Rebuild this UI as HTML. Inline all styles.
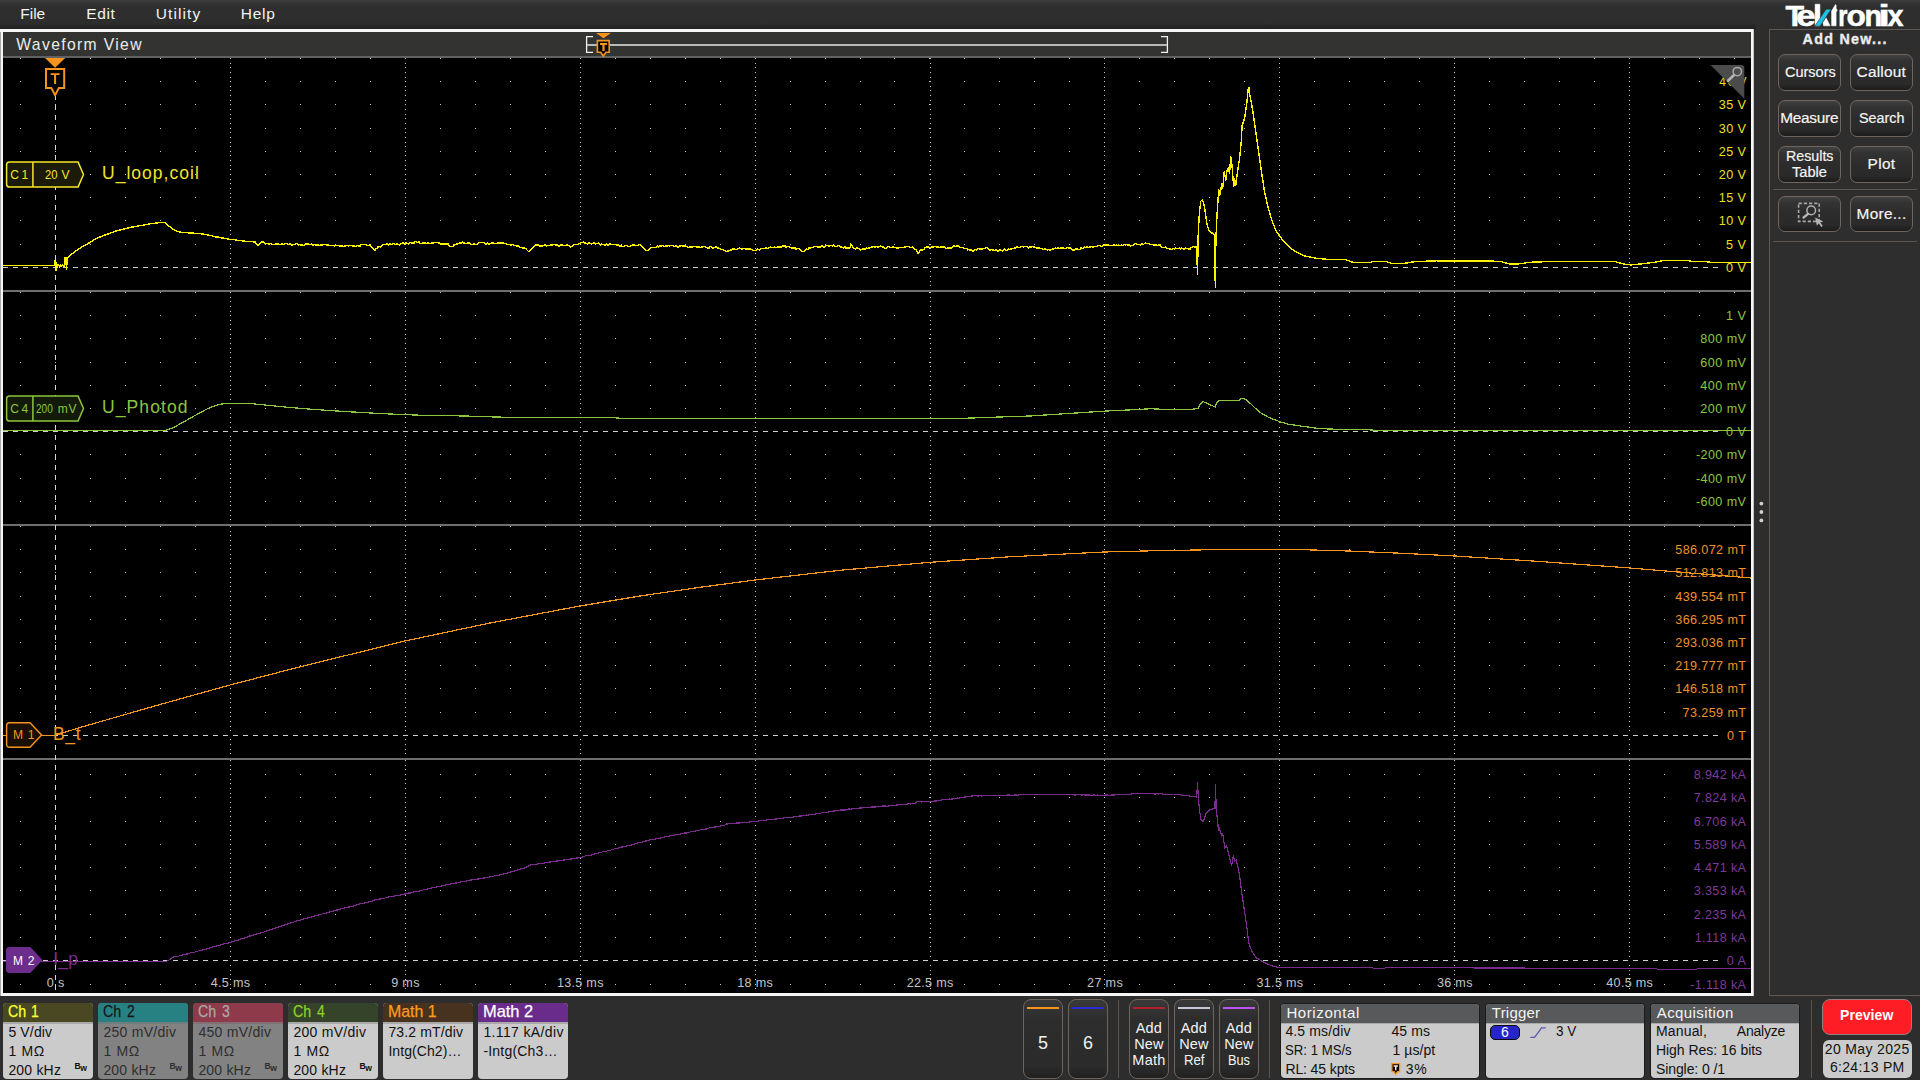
<!DOCTYPE html>
<html><head><meta charset="utf-8"><title>Scope</title>
<style>
html,body{margin:0;padding:0}
html{width:1920px;height:1080px;overflow:hidden;background:#2d2d2d}
body{width:1920px;height:1080px;position:relative;overflow:hidden;background:#2d2d2d;font-family:"Liberation Sans",sans-serif}
.t{position:absolute;white-space:pre;line-height:1;display:block}
.abs{position:absolute}
.btn{position:absolute;box-sizing:border-box;border:1px solid #6f655e;border-radius:7px;background:linear-gradient(#414141 0%,#333333 16%,#2c2c2c 50%,#2a2a2a 82%,#1c1c1c 100%)}
.badge{position:absolute;top:1003px;height:76px;border-radius:4px;overflow:hidden}
.badge .hd{position:absolute;left:0;top:0;right:0;height:19px}
.badge .ln{position:absolute;left:0;right:0;top:19px;height:2px}
</style></head><body>

<div class="abs" style="left:0;top:0;width:1920px;height:29px;background:linear-gradient(#3d3d3d 0px,#323232 4px,#2e2e2e 9px,#2d2d2d 29px)"></div>
<div class="abs" style="left:0;top:23px;width:1756px;height:6px;background:linear-gradient(rgba(34,34,34,0),#202020)"></div>
<span class="t" style="left:20.30px;top:6.00px;font-size:15.50px;color:#f2f2f2;letter-spacing:-0.025px;">File</span>
<span class="t" style="left:86.20px;top:6.00px;font-size:15.50px;color:#f2f2f2;letter-spacing:0.664px;">Edit</span>
<span class="t" style="left:155.80px;top:6.00px;font-size:15.50px;color:#f2f2f2;letter-spacing:1.085px;">Utility</span>
<span class="t" style="left:240.80px;top:6.00px;font-size:15.50px;color:#f2f2f2;letter-spacing:0.741px;">Help</span>
<div class="abs" style="left:0;top:29px;width:1754px;height:967px;background:#f6f6f6"></div>
<div class="abs" style="left:0;top:32px;width:1px;height:964px;background:#a8a8a8"></div>
<div class="abs" style="left:1753px;top:29px;width:1px;height:967px;background:#c4c4c4"></div>
<div class="abs" style="left:3px;top:32px;width:1748px;height:24px;background:#333331"></div>
<div class="abs" style="left:3px;top:56px;width:1748px;height:2px;background:#606264"></div>
<div class="abs" style="left:3px;top:58px;width:1748px;height:935px;background:#000"></div>
<span class="t" style="left:16.30px;top:37.00px;font-size:15.70px;color:#ececec;letter-spacing:1.354px;">Waveform View</span>
<svg class="abs" style="left:0;top:0" width="1920" height="1080" viewBox="0 0 1920 1080"><defs><clipPath id="cp"><rect x="3" y="58" width="1748" height="935"/></clipPath></defs><g clip-path="url(#cp)"><path d="M20 58h1M55 58h1M90 58h1M125 58h1M160 58h1M195 58h1M265 58h1M300 58h1M335 58h1M370 58h1M440 58h1M475 58h1M510 58h1M545 58h1M615 58h1M650 58h1M685 58h1M720 58h1M790 58h1M825 58h1M860 58h1M894 58h1M929 58h1M964 58h1M999 58h1M1034 58h1M1069 58h1M1139 58h1M1174 58h1M1209 58h1M1244 58h1M1314 58h1M1349 58h1M1384 58h1M1419 58h1M1489 58h1M1524 58h1M1559 58h1M1594 58h1M1664 58h1M1699 58h1M1734 58h1M20 81h1M55 81h1M90 81h1M125 81h1M160 81h1M195 81h1M265 81h1M300 81h1M335 81h1M370 81h1M440 81h1M475 81h1M510 81h1M545 81h1M615 81h1M650 81h1M685 81h1M720 81h1M790 81h1M825 81h1M860 81h1M894 81h1M929 81h1M964 81h1M999 81h1M1034 81h1M1069 81h1M1139 81h1M1174 81h1M1209 81h1M1244 81h1M1314 81h1M1349 81h1M1384 81h1M1419 81h1M1489 81h1M1524 81h1M1559 81h1M1594 81h1M1664 81h1M1699 81h1M1734 81h1M20 104h1M55 104h1M90 104h1M125 104h1M160 104h1M195 104h1M265 104h1M300 104h1M335 104h1M370 104h1M440 104h1M475 104h1M510 104h1M545 104h1M615 104h1M650 104h1M685 104h1M720 104h1M790 104h1M825 104h1M860 104h1M894 104h1M929 104h1M964 104h1M999 104h1M1034 104h1M1069 104h1M1139 104h1M1174 104h1M1209 104h1M1244 104h1M1314 104h1M1349 104h1M1384 104h1M1419 104h1M1489 104h1M1524 104h1M1559 104h1M1594 104h1M1664 104h1M1699 104h1M1734 104h1M20 128h1M55 128h1M90 128h1M125 128h1M160 128h1M195 128h1M265 128h1M300 128h1M335 128h1M370 128h1M440 128h1M475 128h1M510 128h1M545 128h1M615 128h1M650 128h1M685 128h1M720 128h1M790 128h1M825 128h1M860 128h1M894 128h1M929 128h1M964 128h1M999 128h1M1034 128h1M1069 128h1M1139 128h1M1174 128h1M1209 128h1M1244 128h1M1314 128h1M1349 128h1M1384 128h1M1419 128h1M1489 128h1M1524 128h1M1559 128h1M1594 128h1M1664 128h1M1699 128h1M1734 128h1M20 151h1M55 151h1M90 151h1M125 151h1M160 151h1M195 151h1M265 151h1M300 151h1M335 151h1M370 151h1M440 151h1M475 151h1M510 151h1M545 151h1M615 151h1M650 151h1M685 151h1M720 151h1M790 151h1M825 151h1M860 151h1M894 151h1M929 151h1M964 151h1M999 151h1M1034 151h1M1069 151h1M1139 151h1M1174 151h1M1209 151h1M1244 151h1M1314 151h1M1349 151h1M1384 151h1M1419 151h1M1489 151h1M1524 151h1M1559 151h1M1594 151h1M1664 151h1M1699 151h1M1734 151h1M20 174h1M55 174h1M90 174h1M125 174h1M160 174h1M195 174h1M265 174h1M300 174h1M335 174h1M370 174h1M440 174h1M475 174h1M510 174h1M545 174h1M615 174h1M650 174h1M685 174h1M720 174h1M790 174h1M825 174h1M860 174h1M894 174h1M929 174h1M964 174h1M999 174h1M1034 174h1M1069 174h1M1139 174h1M1174 174h1M1209 174h1M1244 174h1M1314 174h1M1349 174h1M1384 174h1M1419 174h1M1489 174h1M1524 174h1M1559 174h1M1594 174h1M1664 174h1M1699 174h1M1734 174h1M20 197h1M55 197h1M90 197h1M125 197h1M160 197h1M195 197h1M265 197h1M300 197h1M335 197h1M370 197h1M440 197h1M475 197h1M510 197h1M545 197h1M615 197h1M650 197h1M685 197h1M720 197h1M790 197h1M825 197h1M860 197h1M894 197h1M929 197h1M964 197h1M999 197h1M1034 197h1M1069 197h1M1139 197h1M1174 197h1M1209 197h1M1244 197h1M1314 197h1M1349 197h1M1384 197h1M1419 197h1M1489 197h1M1524 197h1M1559 197h1M1594 197h1M1664 197h1M1699 197h1M1734 197h1M20 220h1M55 220h1M90 220h1M125 220h1M160 220h1M195 220h1M265 220h1M300 220h1M335 220h1M370 220h1M440 220h1M475 220h1M510 220h1M545 220h1M615 220h1M650 220h1M685 220h1M720 220h1M790 220h1M825 220h1M860 220h1M894 220h1M929 220h1M964 220h1M999 220h1M1034 220h1M1069 220h1M1139 220h1M1174 220h1M1209 220h1M1244 220h1M1314 220h1M1349 220h1M1384 220h1M1419 220h1M1489 220h1M1524 220h1M1559 220h1M1594 220h1M1664 220h1M1699 220h1M1734 220h1M20 244h1M55 244h1M90 244h1M125 244h1M160 244h1M195 244h1M265 244h1M300 244h1M335 244h1M370 244h1M440 244h1M475 244h1M510 244h1M545 244h1M615 244h1M650 244h1M685 244h1M720 244h1M790 244h1M825 244h1M860 244h1M894 244h1M929 244h1M964 244h1M999 244h1M1034 244h1M1069 244h1M1139 244h1M1174 244h1M1209 244h1M1244 244h1M1314 244h1M1349 244h1M1384 244h1M1419 244h1M1489 244h1M1524 244h1M1559 244h1M1594 244h1M1664 244h1M1699 244h1M1734 244h1M230 58h1M230 63h1M230 67h1M230 72h1M230 77h1M230 81h1M230 86h1M230 90h1M230 95h1M230 100h1M230 104h1M230 109h1M230 114h1M230 118h1M230 123h1M230 128h1M230 132h1M230 137h1M230 142h1M230 146h1M230 151h1M230 155h1M230 160h1M230 165h1M230 169h1M230 174h1M230 179h1M230 183h1M230 188h1M230 193h1M230 197h1M230 202h1M230 206h1M230 211h1M230 216h1M230 220h1M230 225h1M230 230h1M230 234h1M230 239h1M230 244h1M230 248h1M230 253h1M230 258h1M230 262h1M230 271h1M230 276h1M230 281h1M230 285h1M405 58h1M405 63h1M405 67h1M405 72h1M405 77h1M405 81h1M405 86h1M405 90h1M405 95h1M405 100h1M405 104h1M405 109h1M405 114h1M405 118h1M405 123h1M405 128h1M405 132h1M405 137h1M405 142h1M405 146h1M405 151h1M405 155h1M405 160h1M405 165h1M405 169h1M405 174h1M405 179h1M405 183h1M405 188h1M405 193h1M405 197h1M405 202h1M405 206h1M405 211h1M405 216h1M405 220h1M405 225h1M405 230h1M405 234h1M405 239h1M405 244h1M405 248h1M405 253h1M405 258h1M405 262h1M405 271h1M405 276h1M405 281h1M405 285h1M580 58h1M580 63h1M580 67h1M580 72h1M580 77h1M580 81h1M580 86h1M580 90h1M580 95h1M580 100h1M580 104h1M580 109h1M580 114h1M580 118h1M580 123h1M580 128h1M580 132h1M580 137h1M580 142h1M580 146h1M580 151h1M580 155h1M580 160h1M580 165h1M580 169h1M580 174h1M580 179h1M580 183h1M580 188h1M580 193h1M580 197h1M580 202h1M580 206h1M580 211h1M580 216h1M580 220h1M580 225h1M580 230h1M580 234h1M580 239h1M580 244h1M580 248h1M580 253h1M580 258h1M580 262h1M580 271h1M580 276h1M580 281h1M580 285h1M755 58h1M755 63h1M755 67h1M755 72h1M755 77h1M755 81h1M755 86h1M755 90h1M755 95h1M755 100h1M755 104h1M755 109h1M755 114h1M755 118h1M755 123h1M755 128h1M755 132h1M755 137h1M755 142h1M755 146h1M755 151h1M755 155h1M755 160h1M755 165h1M755 169h1M755 174h1M755 179h1M755 183h1M755 188h1M755 193h1M755 197h1M755 202h1M755 206h1M755 211h1M755 216h1M755 220h1M755 225h1M755 230h1M755 234h1M755 239h1M755 244h1M755 248h1M755 253h1M755 258h1M755 262h1M755 271h1M755 276h1M755 281h1M755 285h1M930 58h1M930 63h1M930 67h1M930 72h1M930 77h1M930 81h1M930 86h1M930 90h1M930 95h1M930 100h1M930 104h1M930 109h1M930 114h1M930 118h1M930 123h1M930 128h1M930 132h1M930 137h1M930 142h1M930 146h1M930 151h1M930 155h1M930 160h1M930 165h1M930 169h1M930 174h1M930 179h1M930 183h1M930 188h1M930 193h1M930 197h1M930 202h1M930 206h1M930 211h1M930 216h1M930 220h1M930 225h1M930 230h1M930 234h1M930 239h1M930 244h1M930 248h1M930 253h1M930 258h1M930 262h1M930 271h1M930 276h1M930 281h1M930 285h1M1104 58h1M1104 63h1M1104 67h1M1104 72h1M1104 77h1M1104 81h1M1104 86h1M1104 90h1M1104 95h1M1104 100h1M1104 104h1M1104 109h1M1104 114h1M1104 118h1M1104 123h1M1104 128h1M1104 132h1M1104 137h1M1104 142h1M1104 146h1M1104 151h1M1104 155h1M1104 160h1M1104 165h1M1104 169h1M1104 174h1M1104 179h1M1104 183h1M1104 188h1M1104 193h1M1104 197h1M1104 202h1M1104 206h1M1104 211h1M1104 216h1M1104 220h1M1104 225h1M1104 230h1M1104 234h1M1104 239h1M1104 244h1M1104 248h1M1104 253h1M1104 258h1M1104 262h1M1104 271h1M1104 276h1M1104 281h1M1104 285h1M1279 58h1M1279 63h1M1279 67h1M1279 72h1M1279 77h1M1279 81h1M1279 86h1M1279 90h1M1279 95h1M1279 100h1M1279 104h1M1279 109h1M1279 114h1M1279 118h1M1279 123h1M1279 128h1M1279 132h1M1279 137h1M1279 142h1M1279 146h1M1279 151h1M1279 155h1M1279 160h1M1279 165h1M1279 169h1M1279 174h1M1279 179h1M1279 183h1M1279 188h1M1279 193h1M1279 197h1M1279 202h1M1279 206h1M1279 211h1M1279 216h1M1279 220h1M1279 225h1M1279 230h1M1279 234h1M1279 239h1M1279 244h1M1279 248h1M1279 253h1M1279 258h1M1279 262h1M1279 271h1M1279 276h1M1279 281h1M1279 285h1M1454 58h1M1454 63h1M1454 67h1M1454 72h1M1454 77h1M1454 81h1M1454 86h1M1454 90h1M1454 95h1M1454 100h1M1454 104h1M1454 109h1M1454 114h1M1454 118h1M1454 123h1M1454 128h1M1454 132h1M1454 137h1M1454 142h1M1454 146h1M1454 151h1M1454 155h1M1454 160h1M1454 165h1M1454 169h1M1454 174h1M1454 179h1M1454 183h1M1454 188h1M1454 193h1M1454 197h1M1454 202h1M1454 206h1M1454 211h1M1454 216h1M1454 220h1M1454 225h1M1454 230h1M1454 234h1M1454 239h1M1454 244h1M1454 248h1M1454 253h1M1454 258h1M1454 262h1M1454 271h1M1454 276h1M1454 281h1M1454 285h1M1629 58h1M1629 63h1M1629 67h1M1629 72h1M1629 77h1M1629 81h1M1629 86h1M1629 90h1M1629 95h1M1629 100h1M1629 104h1M1629 109h1M1629 114h1M1629 118h1M1629 123h1M1629 128h1M1629 132h1M1629 137h1M1629 142h1M1629 146h1M1629 151h1M1629 155h1M1629 160h1M1629 165h1M1629 169h1M1629 174h1M1629 179h1M1629 183h1M1629 188h1M1629 193h1M1629 197h1M1629 202h1M1629 206h1M1629 211h1M1629 216h1M1629 220h1M1629 225h1M1629 230h1M1629 234h1M1629 239h1M1629 244h1M1629 248h1M1629 253h1M1629 258h1M1629 262h1M1629 271h1M1629 276h1M1629 281h1M1629 285h1M20 292h1M55 292h1M90 292h1M125 292h1M160 292h1M195 292h1M265 292h1M300 292h1M335 292h1M370 292h1M440 292h1M475 292h1M510 292h1M545 292h1M615 292h1M650 292h1M685 292h1M720 292h1M790 292h1M825 292h1M860 292h1M894 292h1M929 292h1M964 292h1M999 292h1M1034 292h1M1069 292h1M1139 292h1M1174 292h1M1209 292h1M1244 292h1M1314 292h1M1349 292h1M1384 292h1M1419 292h1M1489 292h1M1524 292h1M1559 292h1M1594 292h1M1664 292h1M1699 292h1M1734 292h1M20 315h1M55 315h1M90 315h1M125 315h1M160 315h1M195 315h1M265 315h1M300 315h1M335 315h1M370 315h1M440 315h1M475 315h1M510 315h1M545 315h1M615 315h1M650 315h1M685 315h1M720 315h1M790 315h1M825 315h1M860 315h1M894 315h1M929 315h1M964 315h1M999 315h1M1034 315h1M1069 315h1M1139 315h1M1174 315h1M1209 315h1M1244 315h1M1314 315h1M1349 315h1M1384 315h1M1419 315h1M1489 315h1M1524 315h1M1559 315h1M1594 315h1M1664 315h1M1699 315h1M1734 315h1M20 338h1M55 338h1M90 338h1M125 338h1M160 338h1M195 338h1M265 338h1M300 338h1M335 338h1M370 338h1M440 338h1M475 338h1M510 338h1M545 338h1M615 338h1M650 338h1M685 338h1M720 338h1M790 338h1M825 338h1M860 338h1M894 338h1M929 338h1M964 338h1M999 338h1M1034 338h1M1069 338h1M1139 338h1M1174 338h1M1209 338h1M1244 338h1M1314 338h1M1349 338h1M1384 338h1M1419 338h1M1489 338h1M1524 338h1M1559 338h1M1594 338h1M1664 338h1M1699 338h1M1734 338h1M20 362h1M55 362h1M90 362h1M125 362h1M160 362h1M195 362h1M265 362h1M300 362h1M335 362h1M370 362h1M440 362h1M475 362h1M510 362h1M545 362h1M615 362h1M650 362h1M685 362h1M720 362h1M790 362h1M825 362h1M860 362h1M894 362h1M929 362h1M964 362h1M999 362h1M1034 362h1M1069 362h1M1139 362h1M1174 362h1M1209 362h1M1244 362h1M1314 362h1M1349 362h1M1384 362h1M1419 362h1M1489 362h1M1524 362h1M1559 362h1M1594 362h1M1664 362h1M1699 362h1M1734 362h1M20 385h1M55 385h1M90 385h1M125 385h1M160 385h1M195 385h1M265 385h1M300 385h1M335 385h1M370 385h1M440 385h1M475 385h1M510 385h1M545 385h1M615 385h1M650 385h1M685 385h1M720 385h1M790 385h1M825 385h1M860 385h1M894 385h1M929 385h1M964 385h1M999 385h1M1034 385h1M1069 385h1M1139 385h1M1174 385h1M1209 385h1M1244 385h1M1314 385h1M1349 385h1M1384 385h1M1419 385h1M1489 385h1M1524 385h1M1559 385h1M1594 385h1M1664 385h1M1699 385h1M1734 385h1M20 408h1M55 408h1M90 408h1M125 408h1M160 408h1M195 408h1M265 408h1M300 408h1M335 408h1M370 408h1M440 408h1M475 408h1M510 408h1M545 408h1M615 408h1M650 408h1M685 408h1M720 408h1M790 408h1M825 408h1M860 408h1M894 408h1M929 408h1M964 408h1M999 408h1M1034 408h1M1069 408h1M1139 408h1M1174 408h1M1209 408h1M1244 408h1M1314 408h1M1349 408h1M1384 408h1M1419 408h1M1489 408h1M1524 408h1M1559 408h1M1594 408h1M1664 408h1M1699 408h1M1734 408h1M20 454h1M55 454h1M90 454h1M125 454h1M160 454h1M195 454h1M265 454h1M300 454h1M335 454h1M370 454h1M440 454h1M475 454h1M510 454h1M545 454h1M615 454h1M650 454h1M685 454h1M720 454h1M790 454h1M825 454h1M860 454h1M894 454h1M929 454h1M964 454h1M999 454h1M1034 454h1M1069 454h1M1139 454h1M1174 454h1M1209 454h1M1244 454h1M1314 454h1M1349 454h1M1384 454h1M1419 454h1M1489 454h1M1524 454h1M1559 454h1M1594 454h1M1664 454h1M1699 454h1M1734 454h1M20 478h1M55 478h1M90 478h1M125 478h1M160 478h1M195 478h1M265 478h1M300 478h1M335 478h1M370 478h1M440 478h1M475 478h1M510 478h1M545 478h1M615 478h1M650 478h1M685 478h1M720 478h1M790 478h1M825 478h1M860 478h1M894 478h1M929 478h1M964 478h1M999 478h1M1034 478h1M1069 478h1M1139 478h1M1174 478h1M1209 478h1M1244 478h1M1314 478h1M1349 478h1M1384 478h1M1419 478h1M1489 478h1M1524 478h1M1559 478h1M1594 478h1M1664 478h1M1699 478h1M1734 478h1M20 501h1M55 501h1M90 501h1M125 501h1M160 501h1M195 501h1M265 501h1M300 501h1M335 501h1M370 501h1M440 501h1M475 501h1M510 501h1M545 501h1M615 501h1M650 501h1M685 501h1M720 501h1M790 501h1M825 501h1M860 501h1M894 501h1M929 501h1M964 501h1M999 501h1M1034 501h1M1069 501h1M1139 501h1M1174 501h1M1209 501h1M1244 501h1M1314 501h1M1349 501h1M1384 501h1M1419 501h1M1489 501h1M1524 501h1M1559 501h1M1594 501h1M1664 501h1M1699 501h1M1734 501h1M230 292h1M230 297h1M230 301h1M230 306h1M230 311h1M230 315h1M230 320h1M230 324h1M230 329h1M230 334h1M230 338h1M230 343h1M230 348h1M230 352h1M230 357h1M230 362h1M230 366h1M230 371h1M230 376h1M230 380h1M230 385h1M230 389h1M230 394h1M230 399h1M230 403h1M230 408h1M230 413h1M230 417h1M230 422h1M230 427h1M230 436h1M230 440h1M230 445h1M230 450h1M230 454h1M230 459h1M230 464h1M230 468h1M230 473h1M230 478h1M230 482h1M230 487h1M230 492h1M230 496h1M230 501h1M230 505h1M230 510h1M230 515h1M230 519h1M405 292h1M405 297h1M405 301h1M405 306h1M405 311h1M405 315h1M405 320h1M405 324h1M405 329h1M405 334h1M405 338h1M405 343h1M405 348h1M405 352h1M405 357h1M405 362h1M405 366h1M405 371h1M405 376h1M405 380h1M405 385h1M405 389h1M405 394h1M405 399h1M405 403h1M405 408h1M405 413h1M405 417h1M405 422h1M405 427h1M405 436h1M405 440h1M405 445h1M405 450h1M405 454h1M405 459h1M405 464h1M405 468h1M405 473h1M405 478h1M405 482h1M405 487h1M405 492h1M405 496h1M405 501h1M405 505h1M405 510h1M405 515h1M405 519h1M580 292h1M580 297h1M580 301h1M580 306h1M580 311h1M580 315h1M580 320h1M580 324h1M580 329h1M580 334h1M580 338h1M580 343h1M580 348h1M580 352h1M580 357h1M580 362h1M580 366h1M580 371h1M580 376h1M580 380h1M580 385h1M580 389h1M580 394h1M580 399h1M580 403h1M580 408h1M580 413h1M580 417h1M580 422h1M580 427h1M580 436h1M580 440h1M580 445h1M580 450h1M580 454h1M580 459h1M580 464h1M580 468h1M580 473h1M580 478h1M580 482h1M580 487h1M580 492h1M580 496h1M580 501h1M580 505h1M580 510h1M580 515h1M580 519h1M755 292h1M755 297h1M755 301h1M755 306h1M755 311h1M755 315h1M755 320h1M755 324h1M755 329h1M755 334h1M755 338h1M755 343h1M755 348h1M755 352h1M755 357h1M755 362h1M755 366h1M755 371h1M755 376h1M755 380h1M755 385h1M755 389h1M755 394h1M755 399h1M755 403h1M755 408h1M755 413h1M755 417h1M755 422h1M755 427h1M755 436h1M755 440h1M755 445h1M755 450h1M755 454h1M755 459h1M755 464h1M755 468h1M755 473h1M755 478h1M755 482h1M755 487h1M755 492h1M755 496h1M755 501h1M755 505h1M755 510h1M755 515h1M755 519h1M930 292h1M930 297h1M930 301h1M930 306h1M930 311h1M930 315h1M930 320h1M930 324h1M930 329h1M930 334h1M930 338h1M930 343h1M930 348h1M930 352h1M930 357h1M930 362h1M930 366h1M930 371h1M930 376h1M930 380h1M930 385h1M930 389h1M930 394h1M930 399h1M930 403h1M930 408h1M930 413h1M930 417h1M930 422h1M930 427h1M930 436h1M930 440h1M930 445h1M930 450h1M930 454h1M930 459h1M930 464h1M930 468h1M930 473h1M930 478h1M930 482h1M930 487h1M930 492h1M930 496h1M930 501h1M930 505h1M930 510h1M930 515h1M930 519h1M1104 292h1M1104 297h1M1104 301h1M1104 306h1M1104 311h1M1104 315h1M1104 320h1M1104 324h1M1104 329h1M1104 334h1M1104 338h1M1104 343h1M1104 348h1M1104 352h1M1104 357h1M1104 362h1M1104 366h1M1104 371h1M1104 376h1M1104 380h1M1104 385h1M1104 389h1M1104 394h1M1104 399h1M1104 403h1M1104 408h1M1104 413h1M1104 417h1M1104 422h1M1104 427h1M1104 436h1M1104 440h1M1104 445h1M1104 450h1M1104 454h1M1104 459h1M1104 464h1M1104 468h1M1104 473h1M1104 478h1M1104 482h1M1104 487h1M1104 492h1M1104 496h1M1104 501h1M1104 505h1M1104 510h1M1104 515h1M1104 519h1M1279 292h1M1279 297h1M1279 301h1M1279 306h1M1279 311h1M1279 315h1M1279 320h1M1279 324h1M1279 329h1M1279 334h1M1279 338h1M1279 343h1M1279 348h1M1279 352h1M1279 357h1M1279 362h1M1279 366h1M1279 371h1M1279 376h1M1279 380h1M1279 385h1M1279 389h1M1279 394h1M1279 399h1M1279 403h1M1279 408h1M1279 413h1M1279 417h1M1279 422h1M1279 427h1M1279 436h1M1279 440h1M1279 445h1M1279 450h1M1279 454h1M1279 459h1M1279 464h1M1279 468h1M1279 473h1M1279 478h1M1279 482h1M1279 487h1M1279 492h1M1279 496h1M1279 501h1M1279 505h1M1279 510h1M1279 515h1M1279 519h1M1454 292h1M1454 297h1M1454 301h1M1454 306h1M1454 311h1M1454 315h1M1454 320h1M1454 324h1M1454 329h1M1454 334h1M1454 338h1M1454 343h1M1454 348h1M1454 352h1M1454 357h1M1454 362h1M1454 366h1M1454 371h1M1454 376h1M1454 380h1M1454 385h1M1454 389h1M1454 394h1M1454 399h1M1454 403h1M1454 408h1M1454 413h1M1454 417h1M1454 422h1M1454 427h1M1454 436h1M1454 440h1M1454 445h1M1454 450h1M1454 454h1M1454 459h1M1454 464h1M1454 468h1M1454 473h1M1454 478h1M1454 482h1M1454 487h1M1454 492h1M1454 496h1M1454 501h1M1454 505h1M1454 510h1M1454 515h1M1454 519h1M1629 292h1M1629 297h1M1629 301h1M1629 306h1M1629 311h1M1629 315h1M1629 320h1M1629 324h1M1629 329h1M1629 334h1M1629 338h1M1629 343h1M1629 348h1M1629 352h1M1629 357h1M1629 362h1M1629 366h1M1629 371h1M1629 376h1M1629 380h1M1629 385h1M1629 389h1M1629 394h1M1629 399h1M1629 403h1M1629 408h1M1629 413h1M1629 417h1M1629 422h1M1629 427h1M1629 436h1M1629 440h1M1629 445h1M1629 450h1M1629 454h1M1629 459h1M1629 464h1M1629 468h1M1629 473h1M1629 478h1M1629 482h1M1629 487h1M1629 492h1M1629 496h1M1629 501h1M1629 505h1M1629 510h1M1629 515h1M1629 519h1M20 526h1M55 526h1M90 526h1M125 526h1M160 526h1M195 526h1M265 526h1M300 526h1M335 526h1M370 526h1M440 526h1M475 526h1M510 526h1M545 526h1M615 526h1M650 526h1M685 526h1M720 526h1M790 526h1M825 526h1M860 526h1M894 526h1M929 526h1M964 526h1M999 526h1M1034 526h1M1069 526h1M1139 526h1M1174 526h1M1209 526h1M1244 526h1M1314 526h1M1349 526h1M1384 526h1M1419 526h1M1489 526h1M1524 526h1M1559 526h1M1594 526h1M1664 526h1M1699 526h1M1734 526h1M20 549h1M55 549h1M90 549h1M125 549h1M160 549h1M195 549h1M265 549h1M300 549h1M335 549h1M370 549h1M440 549h1M475 549h1M510 549h1M545 549h1M615 549h1M650 549h1M685 549h1M720 549h1M790 549h1M825 549h1M860 549h1M894 549h1M929 549h1M964 549h1M999 549h1M1034 549h1M1069 549h1M1139 549h1M1174 549h1M1209 549h1M1244 549h1M1314 549h1M1349 549h1M1384 549h1M1419 549h1M1489 549h1M1524 549h1M1559 549h1M1594 549h1M1664 549h1M1699 549h1M1734 549h1M20 572h1M55 572h1M90 572h1M125 572h1M160 572h1M195 572h1M265 572h1M300 572h1M335 572h1M370 572h1M440 572h1M475 572h1M510 572h1M545 572h1M615 572h1M650 572h1M685 572h1M720 572h1M790 572h1M825 572h1M860 572h1M894 572h1M929 572h1M964 572h1M999 572h1M1034 572h1M1069 572h1M1139 572h1M1174 572h1M1209 572h1M1244 572h1M1314 572h1M1349 572h1M1384 572h1M1419 572h1M1489 572h1M1524 572h1M1559 572h1M1594 572h1M1664 572h1M1699 572h1M1734 572h1M20 596h1M55 596h1M90 596h1M125 596h1M160 596h1M195 596h1M265 596h1M300 596h1M335 596h1M370 596h1M440 596h1M475 596h1M510 596h1M545 596h1M615 596h1M650 596h1M685 596h1M720 596h1M790 596h1M825 596h1M860 596h1M894 596h1M929 596h1M964 596h1M999 596h1M1034 596h1M1069 596h1M1139 596h1M1174 596h1M1209 596h1M1244 596h1M1314 596h1M1349 596h1M1384 596h1M1419 596h1M1489 596h1M1524 596h1M1559 596h1M1594 596h1M1664 596h1M1699 596h1M1734 596h1M20 619h1M55 619h1M90 619h1M125 619h1M160 619h1M195 619h1M265 619h1M300 619h1M335 619h1M370 619h1M440 619h1M475 619h1M510 619h1M545 619h1M615 619h1M650 619h1M685 619h1M720 619h1M790 619h1M825 619h1M860 619h1M894 619h1M929 619h1M964 619h1M999 619h1M1034 619h1M1069 619h1M1139 619h1M1174 619h1M1209 619h1M1244 619h1M1314 619h1M1349 619h1M1384 619h1M1419 619h1M1489 619h1M1524 619h1M1559 619h1M1594 619h1M1664 619h1M1699 619h1M1734 619h1M20 642h1M55 642h1M90 642h1M125 642h1M160 642h1M195 642h1M265 642h1M300 642h1M335 642h1M370 642h1M440 642h1M475 642h1M510 642h1M545 642h1M615 642h1M650 642h1M685 642h1M720 642h1M790 642h1M825 642h1M860 642h1M894 642h1M929 642h1M964 642h1M999 642h1M1034 642h1M1069 642h1M1139 642h1M1174 642h1M1209 642h1M1244 642h1M1314 642h1M1349 642h1M1384 642h1M1419 642h1M1489 642h1M1524 642h1M1559 642h1M1594 642h1M1664 642h1M1699 642h1M1734 642h1M20 665h1M55 665h1M90 665h1M125 665h1M160 665h1M195 665h1M265 665h1M300 665h1M335 665h1M370 665h1M440 665h1M475 665h1M510 665h1M545 665h1M615 665h1M650 665h1M685 665h1M720 665h1M790 665h1M825 665h1M860 665h1M894 665h1M929 665h1M964 665h1M999 665h1M1034 665h1M1069 665h1M1139 665h1M1174 665h1M1209 665h1M1244 665h1M1314 665h1M1349 665h1M1384 665h1M1419 665h1M1489 665h1M1524 665h1M1559 665h1M1594 665h1M1664 665h1M1699 665h1M1734 665h1M20 688h1M55 688h1M90 688h1M125 688h1M160 688h1M195 688h1M265 688h1M300 688h1M335 688h1M370 688h1M440 688h1M475 688h1M510 688h1M545 688h1M615 688h1M650 688h1M685 688h1M720 688h1M790 688h1M825 688h1M860 688h1M894 688h1M929 688h1M964 688h1M999 688h1M1034 688h1M1069 688h1M1139 688h1M1174 688h1M1209 688h1M1244 688h1M1314 688h1M1349 688h1M1384 688h1M1419 688h1M1489 688h1M1524 688h1M1559 688h1M1594 688h1M1664 688h1M1699 688h1M1734 688h1M20 712h1M55 712h1M90 712h1M125 712h1M160 712h1M195 712h1M265 712h1M300 712h1M335 712h1M370 712h1M440 712h1M475 712h1M510 712h1M545 712h1M615 712h1M650 712h1M685 712h1M720 712h1M790 712h1M825 712h1M860 712h1M894 712h1M929 712h1M964 712h1M999 712h1M1034 712h1M1069 712h1M1139 712h1M1174 712h1M1209 712h1M1244 712h1M1314 712h1M1349 712h1M1384 712h1M1419 712h1M1489 712h1M1524 712h1M1559 712h1M1594 712h1M1664 712h1M1699 712h1M1734 712h1M230 526h1M230 531h1M230 535h1M230 540h1M230 545h1M230 549h1M230 554h1M230 558h1M230 563h1M230 568h1M230 572h1M230 577h1M230 582h1M230 586h1M230 591h1M230 596h1M230 600h1M230 605h1M230 610h1M230 614h1M230 619h1M230 623h1M230 628h1M230 633h1M230 637h1M230 642h1M230 647h1M230 651h1M230 656h1M230 661h1M230 665h1M230 670h1M230 674h1M230 679h1M230 684h1M230 688h1M230 693h1M230 698h1M230 702h1M230 707h1M230 712h1M230 716h1M230 721h1M230 726h1M230 730h1M230 739h1M230 744h1M230 749h1M230 753h1M405 526h1M405 531h1M405 535h1M405 540h1M405 545h1M405 549h1M405 554h1M405 558h1M405 563h1M405 568h1M405 572h1M405 577h1M405 582h1M405 586h1M405 591h1M405 596h1M405 600h1M405 605h1M405 610h1M405 614h1M405 619h1M405 623h1M405 628h1M405 633h1M405 637h1M405 642h1M405 647h1M405 651h1M405 656h1M405 661h1M405 665h1M405 670h1M405 674h1M405 679h1M405 684h1M405 688h1M405 693h1M405 698h1M405 702h1M405 707h1M405 712h1M405 716h1M405 721h1M405 726h1M405 730h1M405 739h1M405 744h1M405 749h1M405 753h1M580 526h1M580 531h1M580 535h1M580 540h1M580 545h1M580 549h1M580 554h1M580 558h1M580 563h1M580 568h1M580 572h1M580 577h1M580 582h1M580 586h1M580 591h1M580 596h1M580 600h1M580 605h1M580 610h1M580 614h1M580 619h1M580 623h1M580 628h1M580 633h1M580 637h1M580 642h1M580 647h1M580 651h1M580 656h1M580 661h1M580 665h1M580 670h1M580 674h1M580 679h1M580 684h1M580 688h1M580 693h1M580 698h1M580 702h1M580 707h1M580 712h1M580 716h1M580 721h1M580 726h1M580 730h1M580 739h1M580 744h1M580 749h1M580 753h1M755 526h1M755 531h1M755 535h1M755 540h1M755 545h1M755 549h1M755 554h1M755 558h1M755 563h1M755 568h1M755 572h1M755 577h1M755 582h1M755 586h1M755 591h1M755 596h1M755 600h1M755 605h1M755 610h1M755 614h1M755 619h1M755 623h1M755 628h1M755 633h1M755 637h1M755 642h1M755 647h1M755 651h1M755 656h1M755 661h1M755 665h1M755 670h1M755 674h1M755 679h1M755 684h1M755 688h1M755 693h1M755 698h1M755 702h1M755 707h1M755 712h1M755 716h1M755 721h1M755 726h1M755 730h1M755 739h1M755 744h1M755 749h1M755 753h1M930 526h1M930 531h1M930 535h1M930 540h1M930 545h1M930 549h1M930 554h1M930 558h1M930 563h1M930 568h1M930 572h1M930 577h1M930 582h1M930 586h1M930 591h1M930 596h1M930 600h1M930 605h1M930 610h1M930 614h1M930 619h1M930 623h1M930 628h1M930 633h1M930 637h1M930 642h1M930 647h1M930 651h1M930 656h1M930 661h1M930 665h1M930 670h1M930 674h1M930 679h1M930 684h1M930 688h1M930 693h1M930 698h1M930 702h1M930 707h1M930 712h1M930 716h1M930 721h1M930 726h1M930 730h1M930 739h1M930 744h1M930 749h1M930 753h1M1104 526h1M1104 531h1M1104 535h1M1104 540h1M1104 545h1M1104 549h1M1104 554h1M1104 558h1M1104 563h1M1104 568h1M1104 572h1M1104 577h1M1104 582h1M1104 586h1M1104 591h1M1104 596h1M1104 600h1M1104 605h1M1104 610h1M1104 614h1M1104 619h1M1104 623h1M1104 628h1M1104 633h1M1104 637h1M1104 642h1M1104 647h1M1104 651h1M1104 656h1M1104 661h1M1104 665h1M1104 670h1M1104 674h1M1104 679h1M1104 684h1M1104 688h1M1104 693h1M1104 698h1M1104 702h1M1104 707h1M1104 712h1M1104 716h1M1104 721h1M1104 726h1M1104 730h1M1104 739h1M1104 744h1M1104 749h1M1104 753h1M1279 526h1M1279 531h1M1279 535h1M1279 540h1M1279 545h1M1279 549h1M1279 554h1M1279 558h1M1279 563h1M1279 568h1M1279 572h1M1279 577h1M1279 582h1M1279 586h1M1279 591h1M1279 596h1M1279 600h1M1279 605h1M1279 610h1M1279 614h1M1279 619h1M1279 623h1M1279 628h1M1279 633h1M1279 637h1M1279 642h1M1279 647h1M1279 651h1M1279 656h1M1279 661h1M1279 665h1M1279 670h1M1279 674h1M1279 679h1M1279 684h1M1279 688h1M1279 693h1M1279 698h1M1279 702h1M1279 707h1M1279 712h1M1279 716h1M1279 721h1M1279 726h1M1279 730h1M1279 739h1M1279 744h1M1279 749h1M1279 753h1M1454 526h1M1454 531h1M1454 535h1M1454 540h1M1454 545h1M1454 549h1M1454 554h1M1454 558h1M1454 563h1M1454 568h1M1454 572h1M1454 577h1M1454 582h1M1454 586h1M1454 591h1M1454 596h1M1454 600h1M1454 605h1M1454 610h1M1454 614h1M1454 619h1M1454 623h1M1454 628h1M1454 633h1M1454 637h1M1454 642h1M1454 647h1M1454 651h1M1454 656h1M1454 661h1M1454 665h1M1454 670h1M1454 674h1M1454 679h1M1454 684h1M1454 688h1M1454 693h1M1454 698h1M1454 702h1M1454 707h1M1454 712h1M1454 716h1M1454 721h1M1454 726h1M1454 730h1M1454 739h1M1454 744h1M1454 749h1M1454 753h1M1629 526h1M1629 531h1M1629 535h1M1629 540h1M1629 545h1M1629 549h1M1629 554h1M1629 558h1M1629 563h1M1629 568h1M1629 572h1M1629 577h1M1629 582h1M1629 586h1M1629 591h1M1629 596h1M1629 600h1M1629 605h1M1629 610h1M1629 614h1M1629 619h1M1629 623h1M1629 628h1M1629 633h1M1629 637h1M1629 642h1M1629 647h1M1629 651h1M1629 656h1M1629 661h1M1629 665h1M1629 670h1M1629 674h1M1629 679h1M1629 684h1M1629 688h1M1629 693h1M1629 698h1M1629 702h1M1629 707h1M1629 712h1M1629 716h1M1629 721h1M1629 726h1M1629 730h1M1629 739h1M1629 744h1M1629 749h1M1629 753h1M20 774h1M55 774h1M90 774h1M125 774h1M160 774h1M195 774h1M265 774h1M300 774h1M335 774h1M370 774h1M440 774h1M475 774h1M510 774h1M545 774h1M615 774h1M650 774h1M685 774h1M720 774h1M790 774h1M825 774h1M860 774h1M894 774h1M929 774h1M964 774h1M999 774h1M1034 774h1M1069 774h1M1139 774h1M1174 774h1M1209 774h1M1244 774h1M1314 774h1M1349 774h1M1384 774h1M1419 774h1M1489 774h1M1524 774h1M1559 774h1M1594 774h1M1664 774h1M1699 774h1M1734 774h1M20 797h1M55 797h1M90 797h1M125 797h1M160 797h1M195 797h1M265 797h1M300 797h1M335 797h1M370 797h1M440 797h1M475 797h1M510 797h1M545 797h1M615 797h1M650 797h1M685 797h1M720 797h1M790 797h1M825 797h1M860 797h1M894 797h1M929 797h1M964 797h1M999 797h1M1034 797h1M1069 797h1M1139 797h1M1174 797h1M1209 797h1M1244 797h1M1314 797h1M1349 797h1M1384 797h1M1419 797h1M1489 797h1M1524 797h1M1559 797h1M1594 797h1M1664 797h1M1699 797h1M1734 797h1M20 821h1M55 821h1M90 821h1M125 821h1M160 821h1M195 821h1M265 821h1M300 821h1M335 821h1M370 821h1M440 821h1M475 821h1M510 821h1M545 821h1M615 821h1M650 821h1M685 821h1M720 821h1M790 821h1M825 821h1M860 821h1M894 821h1M929 821h1M964 821h1M999 821h1M1034 821h1M1069 821h1M1139 821h1M1174 821h1M1209 821h1M1244 821h1M1314 821h1M1349 821h1M1384 821h1M1419 821h1M1489 821h1M1524 821h1M1559 821h1M1594 821h1M1664 821h1M1699 821h1M1734 821h1M20 844h1M55 844h1M90 844h1M125 844h1M160 844h1M195 844h1M265 844h1M300 844h1M335 844h1M370 844h1M440 844h1M475 844h1M510 844h1M545 844h1M615 844h1M650 844h1M685 844h1M720 844h1M790 844h1M825 844h1M860 844h1M894 844h1M929 844h1M964 844h1M999 844h1M1034 844h1M1069 844h1M1139 844h1M1174 844h1M1209 844h1M1244 844h1M1314 844h1M1349 844h1M1384 844h1M1419 844h1M1489 844h1M1524 844h1M1559 844h1M1594 844h1M1664 844h1M1699 844h1M1734 844h1M20 867h1M55 867h1M90 867h1M125 867h1M160 867h1M195 867h1M265 867h1M300 867h1M335 867h1M370 867h1M440 867h1M475 867h1M510 867h1M545 867h1M615 867h1M650 867h1M685 867h1M720 867h1M790 867h1M825 867h1M860 867h1M894 867h1M929 867h1M964 867h1M999 867h1M1034 867h1M1069 867h1M1139 867h1M1174 867h1M1209 867h1M1244 867h1M1314 867h1M1349 867h1M1384 867h1M1419 867h1M1489 867h1M1524 867h1M1559 867h1M1594 867h1M1664 867h1M1699 867h1M1734 867h1M20 890h1M55 890h1M90 890h1M125 890h1M160 890h1M195 890h1M265 890h1M300 890h1M335 890h1M370 890h1M440 890h1M475 890h1M510 890h1M545 890h1M615 890h1M650 890h1M685 890h1M720 890h1M790 890h1M825 890h1M860 890h1M894 890h1M929 890h1M964 890h1M999 890h1M1034 890h1M1069 890h1M1139 890h1M1174 890h1M1209 890h1M1244 890h1M1314 890h1M1349 890h1M1384 890h1M1419 890h1M1489 890h1M1524 890h1M1559 890h1M1594 890h1M1664 890h1M1699 890h1M1734 890h1M20 914h1M55 914h1M90 914h1M125 914h1M160 914h1M195 914h1M265 914h1M300 914h1M335 914h1M370 914h1M440 914h1M475 914h1M510 914h1M545 914h1M615 914h1M650 914h1M685 914h1M720 914h1M790 914h1M825 914h1M860 914h1M894 914h1M929 914h1M964 914h1M999 914h1M1034 914h1M1069 914h1M1139 914h1M1174 914h1M1209 914h1M1244 914h1M1314 914h1M1349 914h1M1384 914h1M1419 914h1M1489 914h1M1524 914h1M1559 914h1M1594 914h1M1664 914h1M1699 914h1M1734 914h1M20 937h1M55 937h1M90 937h1M125 937h1M160 937h1M195 937h1M265 937h1M300 937h1M335 937h1M370 937h1M440 937h1M475 937h1M510 937h1M545 937h1M615 937h1M650 937h1M685 937h1M720 937h1M790 937h1M825 937h1M860 937h1M894 937h1M929 937h1M964 937h1M999 937h1M1034 937h1M1069 937h1M1139 937h1M1174 937h1M1209 937h1M1244 937h1M1314 937h1M1349 937h1M1384 937h1M1419 937h1M1489 937h1M1524 937h1M1559 937h1M1594 937h1M1664 937h1M1699 937h1M1734 937h1M20 984h1M55 984h1M90 984h1M125 984h1M160 984h1M195 984h1M265 984h1M300 984h1M335 984h1M370 984h1M440 984h1M475 984h1M510 984h1M545 984h1M615 984h1M650 984h1M685 984h1M720 984h1M790 984h1M825 984h1M860 984h1M894 984h1M929 984h1M964 984h1M999 984h1M1034 984h1M1069 984h1M1139 984h1M1174 984h1M1209 984h1M1244 984h1M1314 984h1M1349 984h1M1384 984h1M1419 984h1M1489 984h1M1524 984h1M1559 984h1M1594 984h1M1664 984h1M1699 984h1M1734 984h1M230 760h1M230 765h1M230 769h1M230 774h1M230 779h1M230 783h1M230 788h1M230 793h1M230 797h1M230 802h1M230 807h1M230 811h1M230 816h1M230 821h1M230 825h1M230 830h1M230 835h1M230 839h1M230 844h1M230 849h1M230 853h1M230 858h1M230 863h1M230 867h1M230 872h1M230 877h1M230 881h1M230 886h1M230 890h1M230 895h1M230 900h1M230 904h1M230 909h1M230 914h1M230 918h1M230 923h1M230 928h1M230 932h1M230 937h1M230 942h1M230 946h1M230 951h1M230 956h1M230 965h1M230 970h1M230 974h1M230 979h1M230 984h1M230 988h1M405 760h1M405 765h1M405 769h1M405 774h1M405 779h1M405 783h1M405 788h1M405 793h1M405 797h1M405 802h1M405 807h1M405 811h1M405 816h1M405 821h1M405 825h1M405 830h1M405 835h1M405 839h1M405 844h1M405 849h1M405 853h1M405 858h1M405 863h1M405 867h1M405 872h1M405 877h1M405 881h1M405 886h1M405 890h1M405 895h1M405 900h1M405 904h1M405 909h1M405 914h1M405 918h1M405 923h1M405 928h1M405 932h1M405 937h1M405 942h1M405 946h1M405 951h1M405 956h1M405 965h1M405 970h1M405 974h1M405 979h1M405 984h1M405 988h1M580 760h1M580 765h1M580 769h1M580 774h1M580 779h1M580 783h1M580 788h1M580 793h1M580 797h1M580 802h1M580 807h1M580 811h1M580 816h1M580 821h1M580 825h1M580 830h1M580 835h1M580 839h1M580 844h1M580 849h1M580 853h1M580 858h1M580 863h1M580 867h1M580 872h1M580 877h1M580 881h1M580 886h1M580 890h1M580 895h1M580 900h1M580 904h1M580 909h1M580 914h1M580 918h1M580 923h1M580 928h1M580 932h1M580 937h1M580 942h1M580 946h1M580 951h1M580 956h1M580 965h1M580 970h1M580 974h1M580 979h1M580 984h1M580 988h1M755 760h1M755 765h1M755 769h1M755 774h1M755 779h1M755 783h1M755 788h1M755 793h1M755 797h1M755 802h1M755 807h1M755 811h1M755 816h1M755 821h1M755 825h1M755 830h1M755 835h1M755 839h1M755 844h1M755 849h1M755 853h1M755 858h1M755 863h1M755 867h1M755 872h1M755 877h1M755 881h1M755 886h1M755 890h1M755 895h1M755 900h1M755 904h1M755 909h1M755 914h1M755 918h1M755 923h1M755 928h1M755 932h1M755 937h1M755 942h1M755 946h1M755 951h1M755 956h1M755 965h1M755 970h1M755 974h1M755 979h1M755 984h1M755 988h1M930 760h1M930 765h1M930 769h1M930 774h1M930 779h1M930 783h1M930 788h1M930 793h1M930 797h1M930 802h1M930 807h1M930 811h1M930 816h1M930 821h1M930 825h1M930 830h1M930 835h1M930 839h1M930 844h1M930 849h1M930 853h1M930 858h1M930 863h1M930 867h1M930 872h1M930 877h1M930 881h1M930 886h1M930 890h1M930 895h1M930 900h1M930 904h1M930 909h1M930 914h1M930 918h1M930 923h1M930 928h1M930 932h1M930 937h1M930 942h1M930 946h1M930 951h1M930 956h1M930 965h1M930 970h1M930 974h1M930 979h1M930 984h1M930 988h1M1104 760h1M1104 765h1M1104 769h1M1104 774h1M1104 779h1M1104 783h1M1104 788h1M1104 793h1M1104 797h1M1104 802h1M1104 807h1M1104 811h1M1104 816h1M1104 821h1M1104 825h1M1104 830h1M1104 835h1M1104 839h1M1104 844h1M1104 849h1M1104 853h1M1104 858h1M1104 863h1M1104 867h1M1104 872h1M1104 877h1M1104 881h1M1104 886h1M1104 890h1M1104 895h1M1104 900h1M1104 904h1M1104 909h1M1104 914h1M1104 918h1M1104 923h1M1104 928h1M1104 932h1M1104 937h1M1104 942h1M1104 946h1M1104 951h1M1104 956h1M1104 965h1M1104 970h1M1104 974h1M1104 979h1M1104 984h1M1104 988h1M1279 760h1M1279 765h1M1279 769h1M1279 774h1M1279 779h1M1279 783h1M1279 788h1M1279 793h1M1279 797h1M1279 802h1M1279 807h1M1279 811h1M1279 816h1M1279 821h1M1279 825h1M1279 830h1M1279 835h1M1279 839h1M1279 844h1M1279 849h1M1279 853h1M1279 858h1M1279 863h1M1279 867h1M1279 872h1M1279 877h1M1279 881h1M1279 886h1M1279 890h1M1279 895h1M1279 900h1M1279 904h1M1279 909h1M1279 914h1M1279 918h1M1279 923h1M1279 928h1M1279 932h1M1279 937h1M1279 942h1M1279 946h1M1279 951h1M1279 956h1M1279 965h1M1279 970h1M1279 974h1M1279 979h1M1279 984h1M1279 988h1M1454 760h1M1454 765h1M1454 769h1M1454 774h1M1454 779h1M1454 783h1M1454 788h1M1454 793h1M1454 797h1M1454 802h1M1454 807h1M1454 811h1M1454 816h1M1454 821h1M1454 825h1M1454 830h1M1454 835h1M1454 839h1M1454 844h1M1454 849h1M1454 853h1M1454 858h1M1454 863h1M1454 867h1M1454 872h1M1454 877h1M1454 881h1M1454 886h1M1454 890h1M1454 895h1M1454 900h1M1454 904h1M1454 909h1M1454 914h1M1454 918h1M1454 923h1M1454 928h1M1454 932h1M1454 937h1M1454 942h1M1454 946h1M1454 951h1M1454 956h1M1454 965h1M1454 970h1M1454 974h1M1454 979h1M1454 984h1M1454 988h1M1629 760h1M1629 765h1M1629 769h1M1629 774h1M1629 779h1M1629 783h1M1629 788h1M1629 793h1M1629 797h1M1629 802h1M1629 807h1M1629 811h1M1629 816h1M1629 821h1M1629 825h1M1629 830h1M1629 835h1M1629 839h1M1629 844h1M1629 849h1M1629 853h1M1629 858h1M1629 863h1M1629 867h1M1629 872h1M1629 877h1M1629 881h1M1629 886h1M1629 890h1M1629 895h1M1629 900h1M1629 904h1M1629 909h1M1629 914h1M1629 918h1M1629 923h1M1629 928h1M1629 932h1M1629 937h1M1629 942h1M1629 946h1M1629 951h1M1629 956h1M1629 965h1M1629 970h1M1629 974h1M1629 979h1M1629 984h1M1629 988h1" stroke="#c9c9c9" stroke-width="1" fill="none" shape-rendering="crispEdges" transform="translate(0,0.5)"/><rect x="3" y="290" width="1748" height="2" fill="#6e6e6e"/><rect x="3" y="524" width="1748" height="2" fill="#6e6e6e"/><rect x="3" y="758" width="1748" height="2" fill="#6e6e6e"/></g></svg>
<span class="t" style="left:1719.20px;top:76.00px;font-size:12.00px;color:#ece027;background:#000;">4</span><span class="t" style="left:1727.80px;top:76.00px;font-size:12.00px;color:#ece027;letter-spacing:0.294px;background:#000;">0 V</span><span class="t" style="left:1718.72px;top:99.00px;font-size:12.60px;color:#ece027;letter-spacing:0.453px;background:#000;box-shadow:-2px 0 0 #000,2px 0 0 #000;">35 V</span><span class="t" style="left:1718.72px;top:123.00px;font-size:12.60px;color:#ece027;letter-spacing:0.453px;background:#000;box-shadow:-2px 0 0 #000,2px 0 0 #000;">30 V</span><span class="t" style="left:1718.72px;top:146.00px;font-size:12.60px;color:#ece027;letter-spacing:0.453px;background:#000;box-shadow:-2px 0 0 #000,2px 0 0 #000;">25 V</span><span class="t" style="left:1718.72px;top:169.00px;font-size:12.60px;color:#ece027;letter-spacing:0.453px;background:#000;box-shadow:-2px 0 0 #000,2px 0 0 #000;">20 V</span><span class="t" style="left:1718.72px;top:192.00px;font-size:12.60px;color:#ece027;letter-spacing:0.453px;background:#000;box-shadow:-2px 0 0 #000,2px 0 0 #000;">15 V</span><span class="t" style="left:1718.72px;top:215.00px;font-size:12.60px;color:#ece027;letter-spacing:0.453px;background:#000;box-shadow:-2px 0 0 #000,2px 0 0 #000;">10 V</span><span class="t" style="left:1726.10px;top:239.00px;font-size:12.60px;color:#ece027;letter-spacing:0.495px;background:#000;box-shadow:-2px 0 0 #000,2px 0 0 #000;">5 V</span><span class="t" style="left:1726.10px;top:262.00px;font-size:12.60px;color:#ece027;letter-spacing:0.495px;background:#000;box-shadow:-2px 0 0 #000,2px 0 0 #000;">0 V</span><span class="t" style="left:1726.10px;top:310.00px;font-size:12.60px;color:#8cc63f;letter-spacing:0.495px;background:#000;box-shadow:-2px 0 0 #000,2px 0 0 #000;">1 V</span><span class="t" style="left:1700.30px;top:333.00px;font-size:12.60px;color:#8cc63f;letter-spacing:0.455px;background:#000;box-shadow:-2px 0 0 #000,2px 0 0 #000;">800 mV</span><span class="t" style="left:1700.30px;top:357.00px;font-size:12.60px;color:#8cc63f;letter-spacing:0.455px;background:#000;box-shadow:-2px 0 0 #000,2px 0 0 #000;">600 mV</span><span class="t" style="left:1700.30px;top:380.00px;font-size:12.60px;color:#8cc63f;letter-spacing:0.455px;background:#000;box-shadow:-2px 0 0 #000,2px 0 0 #000;">400 mV</span><span class="t" style="left:1700.30px;top:403.00px;font-size:12.60px;color:#8cc63f;letter-spacing:0.455px;background:#000;box-shadow:-2px 0 0 #000,2px 0 0 #000;">200 mV</span><span class="t" style="left:1726.10px;top:426.00px;font-size:12.60px;color:#8cc63f;letter-spacing:0.495px;background:#000;box-shadow:-2px 0 0 #000,2px 0 0 #000;">0 V</span><span class="t" style="left:1695.89px;top:449.00px;font-size:12.60px;color:#8cc63f;letter-spacing:0.416px;background:#000;box-shadow:-2px 0 0 #000,2px 0 0 #000;">-200 mV</span><span class="t" style="left:1695.89px;top:473.00px;font-size:12.60px;color:#8cc63f;letter-spacing:0.416px;background:#000;box-shadow:-2px 0 0 #000,2px 0 0 #000;">-400 mV</span><span class="t" style="left:1695.89px;top:496.00px;font-size:12.60px;color:#8cc63f;letter-spacing:0.416px;background:#000;box-shadow:-2px 0 0 #000,2px 0 0 #000;">-600 mV</span><span class="t" style="left:1675.24px;top:544.00px;font-size:12.60px;color:#f0912a;letter-spacing:0.391px;background:#000;box-shadow:-2px 0 0 #000,2px 0 0 #000;">586.072 mT</span><span class="t" style="left:1675.24px;top:567.00px;font-size:12.60px;color:#f0912a;letter-spacing:0.391px;background:#000;box-shadow:-2px 0 0 #000,2px 0 0 #000;">512.813 mT</span><span class="t" style="left:1675.24px;top:591.00px;font-size:12.60px;color:#f0912a;letter-spacing:0.391px;background:#000;box-shadow:-2px 0 0 #000,2px 0 0 #000;">439.554 mT</span><span class="t" style="left:1675.24px;top:614.00px;font-size:12.60px;color:#f0912a;letter-spacing:0.391px;background:#000;box-shadow:-2px 0 0 #000,2px 0 0 #000;">366.295 mT</span><span class="t" style="left:1675.24px;top:637.00px;font-size:12.60px;color:#f0912a;letter-spacing:0.391px;background:#000;box-shadow:-2px 0 0 #000,2px 0 0 #000;">293.036 mT</span><span class="t" style="left:1675.24px;top:660.00px;font-size:12.60px;color:#f0912a;letter-spacing:0.391px;background:#000;box-shadow:-2px 0 0 #000,2px 0 0 #000;">219.777 mT</span><span class="t" style="left:1675.24px;top:683.00px;font-size:12.60px;color:#f0912a;letter-spacing:0.391px;background:#000;box-shadow:-2px 0 0 #000,2px 0 0 #000;">146.518 mT</span><span class="t" style="left:1682.61px;top:707.00px;font-size:12.60px;color:#f0912a;letter-spacing:0.394px;background:#000;box-shadow:-2px 0 0 #000,2px 0 0 #000;">73.259 mT</span><span class="t" style="left:1727.08px;top:730.00px;font-size:12.60px;color:#f0912a;letter-spacing:0.471px;background:#000;box-shadow:-2px 0 0 #000,2px 0 0 #000;">0 T</span><span class="t" style="left:1693.66px;top:769.00px;font-size:12.60px;color:#7d3a98;letter-spacing:0.372px;background:#000;box-shadow:-2px 0 0 #000,2px 0 0 #000;">8.942 kA</span><span class="t" style="left:1693.66px;top:792.00px;font-size:12.60px;color:#7d3a98;letter-spacing:0.372px;background:#000;box-shadow:-2px 0 0 #000,2px 0 0 #000;">7.824 kA</span><span class="t" style="left:1693.66px;top:816.00px;font-size:12.60px;color:#7d3a98;letter-spacing:0.372px;background:#000;box-shadow:-2px 0 0 #000,2px 0 0 #000;">6.706 kA</span><span class="t" style="left:1693.66px;top:839.00px;font-size:12.60px;color:#7d3a98;letter-spacing:0.372px;background:#000;box-shadow:-2px 0 0 #000,2px 0 0 #000;">5.589 kA</span><span class="t" style="left:1693.66px;top:862.00px;font-size:12.60px;color:#7d3a98;letter-spacing:0.372px;background:#000;box-shadow:-2px 0 0 #000,2px 0 0 #000;">4.471 kA</span><span class="t" style="left:1693.66px;top:885.00px;font-size:12.60px;color:#7d3a98;letter-spacing:0.372px;background:#000;box-shadow:-2px 0 0 #000,2px 0 0 #000;">3.353 kA</span><span class="t" style="left:1693.66px;top:909.00px;font-size:12.60px;color:#7d3a98;letter-spacing:0.372px;background:#000;box-shadow:-2px 0 0 #000,2px 0 0 #000;">2.235 kA</span><span class="t" style="left:1694.64px;top:932.00px;font-size:12.60px;color:#7d3a98;letter-spacing:0.365px;background:#000;box-shadow:-2px 0 0 #000,2px 0 0 #000;">1.118 kA</span><span class="t" style="left:1726.83px;top:955.00px;font-size:12.60px;color:#7d3a98;letter-spacing:0.477px;background:#000;box-shadow:-2px 0 0 #000,2px 0 0 #000;">0 A</span><span class="t" style="left:1690.23px;top:979.00px;font-size:12.60px;color:#7d3a98;letter-spacing:0.347px;background:#000;box-shadow:-2px 0 0 #000,2px 0 0 #000;">-1.118 kA</span><span class="t" style="left:46.78px;top:977.00px;font-size:12.60px;color:#c4c4c4;letter-spacing:0.320px;">0 s</span><span class="t" style="left:210.77px;top:977.00px;font-size:12.60px;color:#c4c4c4;letter-spacing:0.288px;">4.5 ms</span><span class="t" style="left:391.13px;top:977.00px;font-size:12.60px;color:#c4c4c4;letter-spacing:0.347px;">9 ms</span><span class="t" style="left:556.94px;top:977.00px;font-size:12.60px;color:#c4c4c4;letter-spacing:0.285px;">13.5 ms</span><span class="t" style="left:737.29px;top:977.00px;font-size:12.60px;color:#c4c4c4;letter-spacing:0.327px;">18 ms</span><span class="t" style="left:906.74px;top:977.00px;font-size:12.60px;color:#c4c4c4;letter-spacing:0.285px;">22.5 ms</span><span class="t" style="left:1087.09px;top:977.00px;font-size:12.60px;color:#c4c4c4;letter-spacing:0.327px;">27 ms</span><span class="t" style="left:1256.54px;top:977.00px;font-size:12.60px;color:#c4c4c4;letter-spacing:0.285px;">31.5 ms</span><span class="t" style="left:1436.89px;top:977.00px;font-size:12.60px;color:#c4c4c4;letter-spacing:0.327px;">36 ms</span><span class="t" style="left:1606.34px;top:977.00px;font-size:12.60px;color:#c4c4c4;letter-spacing:0.285px;">40.5 ms</span>
<svg class="abs" style="left:0;top:0" width="1920" height="1080" viewBox="0 0 1920 1080"><g clip-path="url(#cp)"><line x1="3" x2="1718" y1="267.5" y2="267.5" stroke="#cfcfcf" stroke-width="1" stroke-dasharray="5 5" shape-rendering="crispEdges"/><line x1="3" x2="1718" y1="431.5" y2="431.5" stroke="#cfcfcf" stroke-width="1" stroke-dasharray="5 5" shape-rendering="crispEdges"/><line x1="3" x2="1718" y1="735.5" y2="735.5" stroke="#cfcfcf" stroke-width="1" stroke-dasharray="5 5" shape-rendering="crispEdges"/><line x1="3" x2="1718" y1="960.5" y2="960.5" stroke="#cfcfcf" stroke-width="1" stroke-dasharray="5 5" shape-rendering="crispEdges"/><line x1="55.5" x2="55.5" y1="96" y2="993" stroke="#d8d8d8" stroke-width="1" stroke-dasharray="5 5" stroke-dashoffset="1" shape-rendering="crispEdges"/><path d="M3.0 430.3 L166.0 430.3 L172.5 428.0 L182.5 422.5 L195.0 415.5 L207.5 408.7 L213.0 406.5 L217.5 405.0 L222.0 404.0 L227.5 403.2 L250.0 403.5 L265.0 405.0 L290.0 407.5 L315.0 409.5 L340.0 411.2 L365.0 412.7 L390.0 414.0 L420.0 415.2 L465.0 416.0 L495.0 417.0 L530.0 417.7 L610.0 417.5 L620.0 418.2 L640.0 418.3 L963.0 418.3 L1000.0 417.0 L1030.0 416.0 L1106.7 411.0 L1140.0 409.4 L1150.8 408.7 L1164.4 409.4 L1192.0 409.4 L1198.2 408.3 L1199.6 405.3 L1201.5 402.5 L1203.0 401.5 L1207.7 403.7 L1215.2 407.0 L1216.5 403.3 L1217.8 401.3 L1219.2 400.4 L1238.8 400.4 L1240.0 399.2 L1241.6 398.5 L1244.0 398.9 L1247.0 400.2 L1255.0 408.0 L1261.9 413.7 L1268.0 417.0 L1275.4 420.0 L1279.5 421.6 L1289.0 424.3 L1302.5 426.3 L1314.7 428.0 L1329.6 429.1 L1363.4 429.4 L1377.0 430.4 L1400.0 430.6 L1751.0 430.8" stroke="#8cc63f" stroke-width="1.25" fill="none" stroke-linejoin="round" shape-rendering="crispEdges"/><path d="M3.0 735.5 L55.0 735.5 L56.0 735.0 L80.0 727.5 L120.0 716.0 L160.0 704.5 L230.0 685.0 L300.0 666.8 L405.0 641.0 L490.0 623.0 L580.0 606.0 L640.0 596.0 L700.0 587.3 L755.0 580.0 L840.0 570.3 L930.0 562.3 L1010.0 556.8 L1103.8 552.0 L1160.0 550.6 L1213.5 549.7 L1303.0 549.7 L1348.0 551.0 L1400.0 553.2 L1455.4 556.0 L1540.0 561.5 L1630.0 568.0 L1690.0 573.0 L1751.0 578.0" stroke="#f7941d" stroke-width="1.2" fill="none" stroke-linejoin="round" shape-rendering="crispEdges"/><path d="M3.0 961.6 L165.0 961.6 L165.0 961.4 L166.0 961.3 L167.0 961.0 L168.0 960.6 L169.1 959.9 L170.2 959.0 L171.4 958.1 L172.5 957.3 L173.5 957.0 L174.5 956.7 L175.4 956.5 L176.4 956.5 L177.4 956.3 L178.4 956.2 L179.4 955.9 L180.4 955.5 L181.3 955.3 L182.3 955.0 L183.3 954.9 L184.3 954.6 L185.3 954.2 L186.2 954.0 L187.2 954.0 L188.2 953.5 L189.2 953.4 L190.2 952.9 L191.2 952.6 L192.1 952.3 L193.1 952.3 L194.1 952.2 L195.1 952.0 L196.1 951.5 L197.1 951.4 L198.0 951.0 L199.0 950.6 L200.0 950.6 L201.0 950.4 L202.0 950.1 L203.0 949.8 L204.0 949.7 L205.0 949.3 L206.0 949.1 L207.0 948.8 L208.0 948.6 L209.0 948.2 L210.0 948.0 L211.0 947.7 L212.0 947.3 L213.0 946.9 L214.0 946.7 L215.0 946.3 L216.0 946.3 L217.0 945.8 L218.0 945.4 L219.0 945.1 L220.0 945.2 L221.0 944.8 L222.0 944.4 L223.0 944.1 L224.0 943.7 L225.0 943.7 L226.0 943.6 L227.0 943.4 L228.0 943.2 L229.0 942.6 L230.0 942.5 L231.0 942.1 L232.0 942.0 L233.0 941.8 L234.0 941.5 L235.0 940.9 L236.0 940.8 L237.0 940.6 L238.0 940.3 L239.0 939.7 L240.0 939.2 L241.0 938.8 L242.0 938.4 L243.0 938.4 L244.0 938.2 L245.0 937.9 L246.0 937.7 L247.0 937.3 L248.0 936.8 L249.0 936.3 L250.0 935.9 L251.0 935.9 L252.0 935.4 L253.0 935.1 L254.0 934.8 L255.0 934.4 L256.0 934.1 L257.0 933.8 L258.0 933.7 L259.0 933.3 L260.0 933.0 L261.0 932.9 L262.0 932.5 L263.0 932.3 L264.0 932.0 L265.0 931.4 L266.0 931.1 L267.0 930.8 L268.0 930.6 L269.0 930.2 L270.0 929.9 L271.0 929.6 L272.0 929.1 L273.0 929.0 L274.0 928.4 L275.0 928.3 L276.0 927.8 L277.0 927.3 L278.0 927.0 L279.0 926.9 L280.0 926.8 L281.0 926.1 L282.0 925.9 L283.0 925.5 L284.0 925.4 L285.0 924.8 L286.0 924.6 L287.0 924.2 L288.0 924.0 L289.0 923.6 L290.0 923.5 L291.0 922.9 L292.0 922.5 L293.0 922.3 L294.0 922.0 L295.0 921.5 L296.0 921.3 L297.0 920.8 L298.0 920.7 L299.0 920.4 L300.0 920.2 L301.0 919.9 L302.0 919.5 L303.0 919.1 L304.0 918.8 L305.0 918.8 L306.0 918.3 L307.0 918.2 L308.0 917.7 L309.0 917.3 L310.0 917.1 L311.0 917.1 L312.0 916.8 L313.0 916.4 L314.0 916.4 L315.0 915.9 L316.0 915.6 L317.0 915.4 L318.0 915.2 L319.0 915.0 L320.0 914.7 L321.0 914.3 L322.0 914.0 L323.0 913.6 L324.0 913.5 L325.0 913.3 L326.0 913.1 L327.0 912.6 L328.0 912.3 L329.0 912.2 L330.0 911.9 L331.0 911.5 L332.0 911.2 L333.0 911.2 L334.0 910.7 L335.0 910.3 L336.0 910.1 L337.0 910.0 L338.0 909.9 L338.9 909.4 L339.9 909.1 L340.9 908.8 L341.9 908.6 L342.9 908.4 L343.9 908.1 L344.9 907.8 L345.9 907.5 L346.8 907.6 L347.8 907.4 L348.8 906.9 L349.8 906.9 L350.8 906.4 L351.8 906.1 L352.8 906.2 L353.8 906.0 L354.7 905.7 L355.7 905.3 L356.7 904.9 L357.7 904.8 L358.7 904.3 L359.7 904.0 L360.7 903.8 L361.6 903.5 L362.6 903.3 L363.6 903.3 L364.6 903.1 L365.6 902.8 L366.6 902.6 L367.6 902.3 L368.6 901.9 L369.5 901.7 L370.5 901.4 L371.5 901.3 L372.5 901.2 L373.8 900.5 L375.0 899.9 L376.0 899.8 L377.0 899.5 L378.0 899.1 L379.0 899.1 L380.0 899.0 L381.0 898.9 L382.0 898.6 L383.0 898.5 L384.0 898.3 L385.0 898.0 L386.0 897.7 L387.0 897.4 L388.0 897.3 L389.0 896.9 L390.0 896.8 L391.0 896.8 L392.0 896.6 L393.0 896.4 L394.0 896.1 L395.0 895.9 L396.0 895.7 L397.0 895.6 L398.0 895.3 L399.0 895.2 L400.0 895.2 L401.0 894.7 L402.0 894.6 L403.0 894.5 L404.0 894.2 L405.0 894.0 L406.0 894.0 L407.0 893.5 L408.0 893.3 L409.0 892.9 L410.0 892.9 L411.0 892.9 L412.0 892.6 L413.0 892.1 L414.0 892.0 L415.0 891.8 L416.0 891.7 L417.0 891.4 L418.0 891.2 L419.0 891.1 L420.0 890.8 L421.0 890.5 L422.0 890.4 L423.0 890.0 L424.0 889.8 L425.0 889.5 L426.0 889.4 L427.0 889.0 L428.0 889.0 L429.0 888.7 L430.0 888.3 L431.0 888.0 L432.0 887.9 L433.0 887.5 L434.0 887.4 L435.0 887.2 L436.0 887.1 L437.0 886.8 L438.0 886.5 L439.0 886.3 L440.0 886.2 L441.0 886.2 L442.0 885.9 L443.0 885.5 L444.0 885.4 L445.0 885.1 L446.0 884.8 L447.0 884.4 L448.0 884.5 L449.0 884.4 L450.0 884.1 L451.0 883.9 L452.0 883.7 L453.0 883.4 L454.0 883.4 L455.0 883.1 L456.0 883.0 L457.0 882.9 L458.0 882.8 L459.0 882.5 L460.0 882.2 L461.0 882.0 L462.0 881.7 L463.0 881.7 L464.0 881.4 L465.0 881.4 L466.0 881.1 L467.0 880.9 L468.0 880.6 L469.0 880.5 L470.0 880.2 L471.0 879.9 L472.0 880.0 L473.0 879.7 L474.0 879.5 L475.0 879.3 L476.0 879.2 L477.0 879.1 L478.0 879.0 L479.0 878.9 L480.0 878.6 L481.0 878.6 L482.0 878.5 L483.0 878.0 L484.0 878.0 L485.0 877.9 L486.0 877.8 L487.0 877.3 L488.0 877.3 L489.0 877.1 L490.0 876.6 L491.0 876.3 L492.0 876.5 L493.0 876.4 L494.0 876.0 L495.0 875.7 L496.0 875.5 L497.0 875.3 L498.0 875.4 L499.0 875.1 L500.0 874.8 L501.0 874.8 L502.0 874.6 L503.0 874.1 L504.0 874.0 L505.0 873.7 L506.0 873.5 L507.0 873.2 L508.0 873.0 L509.0 872.7 L510.0 872.5 L511.0 871.9 L512.0 871.7 L513.0 871.4 L514.0 871.2 L515.0 870.8 L516.0 870.7 L517.0 870.4 L518.0 869.9 L519.0 869.5 L520.0 869.2 L521.0 869.0 L522.0 868.6 L523.0 868.4 L524.0 868.0 L525.0 867.9 L526.0 867.3 L527.0 866.8 L528.0 866.4 L529.0 865.5 L530.0 865.1 L531.0 864.9 L532.0 864.7 L533.0 864.6 L534.0 864.6 L535.0 864.3 L536.0 864.1 L537.0 864.2 L538.0 863.7 L539.0 863.7 L540.0 863.6 L541.0 863.2 L542.0 863.2 L543.0 863.1 L544.0 863.1 L545.0 862.8 L546.0 862.8 L547.0 862.6 L548.0 862.4 L549.0 862.4 L550.0 861.9 L551.0 861.9 L552.0 861.8 L553.0 861.5 L554.0 861.5 L555.0 861.3 L556.0 861.1 L557.0 861.0 L558.0 860.9 L559.0 860.6 L560.0 860.4 L561.0 860.3 L562.0 860.2 L563.0 860.2 L564.0 859.9 L565.0 859.9 L566.0 859.6 L567.0 859.5 L568.0 859.2 L569.0 859.1 L570.0 859.2 L571.0 859.0 L572.0 858.9 L573.0 858.6 L574.0 858.3 L575.0 858.1 L576.0 858.1 L577.0 858.0 L578.0 858.0 L579.0 857.5 L580.0 857.5 L581.0 857.4 L582.0 857.1 L583.0 856.6 L584.0 856.4 L585.0 856.0 L586.0 855.7 L587.0 855.8 L588.0 855.6 L589.0 855.4 L590.0 855.2 L591.0 855.1 L592.0 854.7 L593.0 854.4 L594.0 854.2 L595.0 854.0 L596.0 853.7 L597.0 853.5 L598.0 853.0 L599.0 852.9 L600.0 852.6 L601.0 852.5 L602.0 852.0 L603.0 851.6 L604.0 851.3 L605.0 851.3 L606.0 851.3 L607.0 851.0 L608.0 850.6 L609.0 850.5 L610.0 850.3 L611.0 850.0 L612.0 849.6 L613.0 849.3 L614.0 849.0 L615.0 848.8 L616.0 848.5 L617.0 848.4 L618.0 848.3 L619.0 847.8 L620.0 847.6 L621.0 847.2 L622.0 846.9 L623.0 846.9 L624.0 846.7 L625.0 846.6 L626.0 846.3 L627.0 845.8 L628.0 845.5 L629.0 845.4 L630.0 845.4 L631.0 845.3 L632.0 844.8 L633.0 844.5 L634.0 844.0 L635.0 843.9 L636.0 843.6 L637.0 843.2 L638.0 842.9 L639.0 842.6 L640.0 842.6 L641.0 842.3 L642.0 842.3 L643.0 841.9 L644.0 841.8 L645.0 841.4 L646.0 840.9 L647.0 840.9 L648.0 840.5 L649.0 840.3 L650.0 839.9 L651.0 839.5 L652.0 839.6 L653.0 839.5 L654.0 839.4 L655.0 839.2 L656.0 838.7 L657.0 838.6 L658.0 838.5 L659.0 838.2 L660.0 838.2 L661.0 837.8 L662.0 837.8 L663.0 837.6 L664.0 837.1 L665.0 836.7 L666.0 836.7 L667.0 836.7 L668.0 836.3 L669.0 836.0 L670.0 836.0 L671.0 835.7 L672.0 835.7 L673.0 835.4 L674.0 835.0 L675.0 834.9 L676.0 834.8 L677.0 834.6 L678.0 834.5 L679.0 834.1 L680.0 834.1 L681.0 833.8 L682.0 833.7 L683.0 833.5 L684.0 833.2 L685.0 833.0 L686.0 832.9 L687.0 832.9 L688.0 832.7 L689.0 832.4 L690.0 832.0 L691.0 831.6 L692.0 831.7 L693.0 831.5 L694.0 831.4 L695.0 831.0 L696.0 830.9 L697.0 830.8 L698.0 830.7 L699.0 830.4 L700.0 830.0 L701.0 829.8 L702.0 829.8 L703.0 829.4 L704.0 829.3 L705.0 829.1 L706.0 829.0 L707.0 828.9 L708.0 828.4 L709.0 828.0 L710.0 827.8 L711.0 827.7 L712.0 827.6 L713.0 827.5 L714.0 827.4 L715.0 826.9 L716.0 826.9 L717.0 826.8 L718.0 826.7 L719.0 826.4 L720.0 826.0 L721.0 825.9 L722.0 825.8 L723.0 825.6 L724.0 825.5 L725.0 825.1 L726.0 824.3 L727.0 823.9 L728.0 824.0 L729.0 823.7 L730.0 823.8 L731.0 823.9 L732.0 823.5 L733.0 823.5 L734.0 823.5 L735.0 823.3 L736.0 823.1 L737.0 822.9 L738.0 823.0 L739.0 823.1 L740.0 822.9 L741.0 822.6 L742.0 822.7 L743.0 822.7 L744.0 822.4 L745.0 822.4 L746.0 822.5 L747.0 822.5 L748.0 822.3 L749.0 822.1 L750.0 822.0 L751.0 821.8 L752.0 821.6 L753.0 821.4 L754.0 821.6 L755.0 821.4 L756.0 821.4 L757.0 821.2 L758.0 821.1 L759.0 820.8 L760.0 820.6 L761.0 820.8 L762.0 820.6 L763.0 820.3 L764.0 820.4 L765.0 820.4 L766.0 820.1 L767.0 820.0 L768.0 819.8 L769.0 819.8 L770.0 819.4 L771.0 819.2 L772.0 819.5 L773.0 819.5 L774.0 819.3 L775.0 819.1 L776.0 818.9 L777.0 818.9 L778.0 818.7 L779.0 818.8 L780.0 818.7 L781.0 818.6 L782.0 818.5 L783.0 818.1 L784.0 817.8 L785.0 817.6 L786.0 817.5 L787.0 817.3 L788.0 817.1 L789.0 817.2 L790.0 817.3 L791.0 817.1 L792.0 817.2 L793.0 817.1 L794.0 816.7 L795.0 816.6 L796.0 816.5 L797.0 816.2 L798.0 816.4 L799.0 816.1 L800.0 816.0 L801.0 815.9 L802.0 816.0 L803.0 815.8 L804.0 815.5 L805.0 815.3 L806.0 815.0 L807.0 815.2 L808.0 815.2 L809.0 814.8 L810.0 814.4 L811.0 814.3 L812.0 814.1 L813.0 814.3 L814.0 814.3 L815.0 814.2 L816.0 813.7 L817.0 813.7 L818.0 813.6 L819.0 813.5 L820.0 813.5 L821.0 813.0 L822.0 812.7 L823.0 812.8 L824.0 812.8 L825.0 812.7 L826.0 812.4 L827.0 812.3 L828.0 812.2 L829.0 811.8 L830.0 811.7 L831.0 811.5 L832.0 811.3 L833.0 811.2 L834.0 811.0 L835.0 810.9 L836.0 810.7 L837.0 810.8 L838.0 810.4 L839.0 810.5 L840.0 810.2 L841.0 810.0 L842.0 810.2 L843.0 809.9 L844.0 810.0 L845.0 809.9 L846.0 809.9 L847.0 809.4 L848.0 809.2 L849.0 808.9 L850.0 809.1 L851.0 809.1 L852.0 809.0 L853.0 808.8 L854.0 808.6 L855.0 808.7 L856.0 808.5 L857.0 808.5 L858.0 808.2 L859.0 808.1 L860.0 807.9 L861.0 808.0 L862.0 808.0 L863.0 807.7 L864.0 807.9 L865.0 807.7 L866.0 807.6 L867.0 807.4 L868.0 807.3 L869.0 807.4 L870.0 807.3 L871.0 807.0 L872.0 807.0 L873.0 806.9 L874.0 807.1 L875.0 806.8 L876.0 807.0 L877.0 806.6 L878.0 806.7 L879.0 806.7 L880.0 806.4 L881.0 806.3 L882.0 806.2 L883.0 806.0 L884.0 805.9 L885.0 805.9 L886.0 806.1 L887.0 806.2 L888.0 806.1 L889.0 805.7 L890.0 805.5 L891.0 805.7 L892.0 805.3 L893.0 805.4 L894.0 805.2 L895.0 805.4 L896.0 805.0 L897.0 805.1 L898.0 804.9 L899.0 804.7 L900.0 804.5 L901.0 804.7 L902.0 804.6 L903.0 804.4 L904.0 804.3 L905.0 804.5 L906.0 804.2 L907.0 804.2 L908.0 803.9 L909.0 803.8 L910.0 803.9 L911.0 803.9 L912.0 803.7 L913.0 803.4 L914.0 803.3 L915.0 803.4 L916.0 802.6 L917.0 801.7 L918.0 801.6 L919.0 801.7 L920.0 801.8 L921.0 801.9 L922.0 801.9 L923.0 801.7 L924.0 801.5 L925.0 801.7 L926.0 801.7 L927.0 801.8 L928.0 801.6 L929.0 801.8 L930.0 801.7 L931.0 801.7 L932.0 801.7 L933.0 801.4 L934.0 801.0 L935.0 801.1 L936.0 800.9 L937.0 801.0 L938.1 800.6 L939.1 800.4 L940.1 800.5 L941.1 800.2 L942.1 799.9 L943.1 799.8 L944.1 799.8 L945.1 799.5 L946.1 799.5 L947.1 799.4 L948.1 799.3 L949.1 799.0 L950.1 799.1 L951.1 799.1 L952.2 799.0 L953.2 798.7 L954.2 798.6 L955.2 798.4 L956.2 798.4 L957.2 798.0 L958.2 798.1 L959.2 798.1 L960.2 797.8 L961.2 797.7 L962.2 797.5 L963.2 797.4 L964.2 797.0 L965.2 797.2 L966.3 796.9 L967.3 796.6 L968.3 796.4 L969.3 796.3 L970.3 796.4 L971.3 796.1 L972.3 795.9 L973.3 795.9 L974.3 795.8 L975.3 795.7 L976.3 795.8 L977.3 795.9 L978.3 795.9 L979.3 795.9 L980.3 795.7 L981.3 795.9 L982.3 795.9 L983.3 795.6 L984.3 795.5 L985.2 795.6 L986.2 795.6 L987.2 795.5 L988.2 795.4 L989.2 795.4 L990.2 795.3 L991.2 795.5 L992.2 795.6 L993.2 795.4 L994.2 795.5 L995.2 795.5 L996.2 795.3 L997.2 795.5 L998.2 795.6 L999.2 795.4 L1000.2 795.3 L1001.2 795.4 L1002.2 795.4 L1003.2 795.2 L1004.2 795.4 L1005.2 795.4 L1006.2 795.2 L1007.1 795.0 L1008.1 795.0 L1009.1 795.0 L1010.1 795.2 L1011.1 795.3 L1012.1 795.3 L1013.1 795.3 L1014.1 795.3 L1015.1 794.9 L1016.1 794.9 L1017.1 795.1 L1018.1 795.2 L1019.1 794.9 L1020.1 794.8 L1021.1 794.8 L1022.1 794.7 L1023.1 794.7 L1024.1 794.5 L1025.1 794.6 L1026.1 794.6 L1027.1 794.4 L1028.1 794.3 L1029.0 794.6 L1030.0 794.7 L1031.0 794.8 L1032.0 794.7 L1033.0 794.7 L1034.0 794.7 L1035.0 794.7 L1036.0 794.4 L1037.0 794.4 L1038.0 794.3 L1039.0 794.4 L1040.0 794.2 L1041.0 794.3 L1042.0 794.5 L1043.0 794.5 L1044.0 794.3 L1045.0 794.4 L1046.0 794.4 L1047.0 794.6 L1048.0 794.4 L1049.0 794.4 L1050.0 794.5 L1051.1 794.3 L1052.1 794.5 L1053.1 794.7 L1054.1 794.6 L1055.1 794.5 L1056.1 794.5 L1057.1 794.6 L1058.1 794.4 L1059.1 794.4 L1060.1 794.3 L1061.1 794.4 L1062.1 794.5 L1063.1 794.5 L1064.1 794.5 L1065.1 794.4 L1066.1 794.6 L1067.1 794.8 L1068.1 794.8 L1069.1 794.8 L1070.1 794.9 L1071.1 794.7 L1072.2 794.9 L1073.2 794.8 L1074.2 794.9 L1075.2 794.9 L1076.2 794.9 L1077.2 794.8 L1078.2 794.7 L1079.2 794.7 L1080.2 794.8 L1081.2 794.9 L1082.2 795.0 L1083.2 794.8 L1084.2 794.8 L1085.2 795.1 L1086.2 794.9 L1087.2 795.0 L1088.2 795.1 L1089.2 795.0 L1090.2 795.3 L1091.2 795.1 L1092.2 795.2 L1093.3 795.0 L1094.3 794.9 L1095.3 795.2 L1096.3 795.2 L1097.3 795.0 L1098.3 795.1 L1099.3 795.1 L1100.3 795.3 L1101.3 795.1 L1102.3 795.1 L1103.3 795.4 L1104.3 795.4 L1105.3 795.1 L1106.3 795.0 L1107.3 795.0 L1108.3 795.1 L1109.3 795.1 L1110.3 795.1 L1111.3 795.1 L1112.3 795.0 L1113.3 795.0 L1114.3 794.9 L1115.3 794.9 L1116.3 794.7 L1117.3 794.8 L1118.3 794.7 L1119.3 794.8 L1120.3 794.4 L1121.3 794.6 L1122.3 794.2 L1123.3 794.3 L1124.3 794.3 L1125.3 794.2 L1126.3 794.4 L1127.3 794.2 L1128.3 794.1 L1129.3 794.1 L1130.3 794.2 L1131.3 794.1 L1132.3 793.9 L1133.3 793.8 L1134.3 793.7 L1135.3 793.8 L1136.3 793.6 L1137.3 793.5 L1138.3 793.5 L1139.3 793.4 L1140.3 793.3 L1141.3 793.5 L1142.3 793.5 L1143.3 793.4 L1144.3 793.4 L1145.3 793.2 L1146.3 793.3 L1147.3 793.2 L1148.3 793.4 L1149.3 793.5 L1150.2 793.4 L1151.2 793.7 L1152.2 793.6 L1153.2 793.8 L1154.2 793.9 L1155.2 794.0 L1156.2 793.8 L1157.2 793.8 L1158.2 794.0 L1159.2 793.7 L1160.2 793.6 L1161.2 793.8 L1162.1 793.9 L1163.1 794.2 L1164.1 794.2 L1165.1 794.2 L1166.1 794.4 L1167.1 794.3 L1168.1 794.3 L1169.1 794.3 L1170.1 794.3 L1171.1 794.2 L1172.1 794.3 L1173.1 794.3 L1174.0 794.6 L1175.0 794.6 L1176.0 794.6 L1177.0 794.4 L1178.0 794.4 L1179.0 794.5 L1180.0 794.6 L1181.0 794.8 L1182.0 795.1 L1182.9 795.3 L1183.9 795.3 L1184.9 795.4 L1185.9 795.5 L1186.9 795.9 L1187.9 795.8 L1188.8 795.9 L1189.8 796.2 L1190.8 796.1 L1191.8 796.2 L1192.8 796.6 L1193.8 796.8 L1194.7 796.8 L1195.7 796.7 L1196.7 797.1 L1197.5 783.0 L1198.3 797.0 L1199.5 810.0 L1200.8 819.0 L1203.0 822.0 L1204.5 818.0 L1206.0 813.7 L1210.2 809.6 L1215.0 808.5 L1215.4 784.2 L1216.2 807.5 L1218.5 830.4 L1219.5 828.0 L1221.7 836.7 L1222.8 834.0 L1224.8 848.0 L1226.5 846.0 L1229.0 855.4 L1231.5 865.8 L1233.5 855.4 L1234.6 861.7 L1236.2 859.6 L1239.4 874.2 L1241.5 890.8 L1244.6 911.7 L1247.0 928.3 L1248.7 943.0 L1251.9 951.2 L1256.0 957.5 L1263.3 962.0 L1271.7 965.8 L1278.0 967.3 L1372.0 967.5 L1374.0 968.5 L1384.0 968.5 L1386.0 967.6 L1500.0 968.0 L1590.0 968.4 L1656.0 968.5 L1658.0 969.5 L1696.0 969.5 L1698.0 968.5 L1751.0 968.5" stroke="#7b2d8e" stroke-width="1.2" fill="none" stroke-linejoin="round" shape-rendering="crispEdges"/><path d="M3.0 265.5 L54.5 265.5 L55.3 259.3 L55.9 270.8 L56.5 263.0 L57.5 266.8 L58.5 264.6 L59.5 267.0 L60.5 265.0 L61.5 266.6 L62.5 265.2 L63.5 266.4 L64.6 265.6 L65.2 257.5 L65.7 264.5 L66.1 258.0 L66.6 269.7 L67.1 258.8 L67.8 257.6 L70.0 255.3 L71.1 254.4 L72.2 253.7 L73.3 252.9 L74.2 252.3 L75.2 251.5 L76.1 250.8 L77.0 250.1 L77.9 249.5 L78.9 248.9 L79.8 248.2 L80.8 247.6 L81.7 247.1 L82.8 246.6 L83.8 245.8 L84.9 245.1 L86.0 244.6 L87.0 244.2 L88.0 243.6 L89.0 243.0 L90.0 242.6 L91.0 241.8 L92.0 241.3 L93.0 240.6 L94.0 239.8 L95.0 239.2 L96.0 238.7 L97.0 238.4 L98.0 237.8 L99.0 237.4 L100.0 237.0 L101.0 236.6 L101.9 236.3 L102.9 235.8 L103.8 235.4 L104.8 235.1 L105.7 234.8 L106.7 234.5 L107.7 234.0 L108.8 233.7 L109.8 233.3 L110.8 232.8 L111.9 232.5 L112.9 232.2 L114.0 231.7 L115.0 231.3 L116.0 231.0 L117.0 230.9 L118.0 230.6 L119.0 230.3 L120.0 230.1 L121.0 229.7 L122.0 229.4 L123.0 229.3 L124.0 228.9 L125.0 228.7 L126.0 228.3 L127.0 228.2 L128.0 228.0 L129.0 227.8 L130.0 227.6 L131.0 227.3 L132.0 227.1 L133.0 226.9 L134.0 226.7 L135.0 226.4 L136.0 226.3 L137.0 226.2 L138.0 225.9 L139.0 225.8 L140.0 225.4 L141.0 225.4 L142.0 225.2 L143.0 225.2 L144.0 225.0 L145.0 224.7 L146.0 224.5 L147.0 224.4 L148.1 224.1 L149.1 224.0 L150.2 223.8 L151.2 223.6 L152.2 223.5 L153.3 223.5 L154.2 223.3 L155.2 223.1 L156.1 223.0 L157.1 223.1 L158.0 222.8 L158.9 222.7 L159.9 222.6 L160.8 222.6 L161.9 222.5 L163.1 222.5 L164.2 222.2 L165.4 223.0 L166.7 223.8 L167.8 224.9 L168.9 226.0 L170.0 226.8 L171.1 227.6 L172.2 228.5 L173.3 229.4 L174.2 229.9 L175.1 230.5 L176.0 230.9 L177.2 231.2 L178.3 231.7 L179.3 231.8 L180.2 231.9 L181.2 232.2 L182.2 232.2 L183.2 232.3 L184.2 232.4 L185.1 232.5 L186.1 232.4 L187.1 232.6 L188.1 232.7 L189.0 232.9 L190.0 232.9 L191.0 232.9 L192.0 233.0 L193.0 233.0 L194.0 233.2 L195.0 233.2 L196.0 233.2 L197.0 233.3 L198.0 233.4 L199.0 233.6 L200.0 233.6 L201.0 233.7 L201.9 233.9 L202.9 234.0 L203.8 234.2 L204.8 234.3 L205.7 234.6 L206.7 234.7 L207.7 234.9 L208.8 235.1 L209.8 235.4 L210.8 235.6 L211.9 235.8 L212.9 236.2 L214.0 236.6 L215.0 236.8 L216.0 236.9 L217.0 237.0 L218.0 237.1 L219.0 237.3 L220.0 237.5 L221.0 237.8 L222.0 237.9 L223.0 238.0 L224.0 238.4 L225.0 238.5 L226.0 238.6 L227.0 238.8 L228.0 238.8 L229.0 239.1 L230.0 239.4 L231.0 239.6 L232.0 239.7 L233.0 239.7 L234.0 239.7 L235.0 239.8 L236.0 240.0 L237.0 240.2 L238.0 240.3 L239.0 240.4 L240.0 240.4 L241.0 240.6 L242.0 240.8 L243.0 241.0 L244.0 241.1 L245.0 241.2 L246.0 241.2 L247.0 241.2 L248.0 241.3 L249.0 241.4 L250.0 241.4 L251.0 241.4 L252.0 241.6 L253.0 241.7 L254.0 241.9 L255.0 242.1 L255.0 241.9 L256.0 243.5 L257.0 244.6 L258.3 245.5 L259.2 244.0 L260.1 243.0 L261.0 242.4 L262.0 242.0 L263.0 241.6 L264.0 242.0 L265.1 243.1 L266.1 243.7 L267.2 243.5 L268.3 244.0 L269.3 244.3 L270.3 243.2 L271.3 243.9 L272.2 244.5 L273.2 244.5 L274.2 244.5 L275.2 244.0 L276.2 243.4 L277.2 244.3 L278.2 243.7 L279.1 244.4 L280.1 244.9 L281.1 244.1 L282.1 243.9 L283.1 244.8 L284.1 244.7 L285.1 243.7 L286.1 243.3 L287.0 243.3 L288.0 244.6 L289.0 244.9 L290.0 243.8 L291.0 244.7 L292.0 245.2 L293.0 244.8 L294.0 244.2 L295.0 244.4 L296.0 243.7 L297.0 243.3 L298.0 244.9 L299.0 244.8 L300.0 244.6 L301.0 245.3 L302.0 244.6 L303.0 245.2 L304.0 245.3 L305.0 244.3 L306.0 244.1 L307.0 244.1 L308.0 244.0 L309.0 244.6 L310.0 244.3 L311.0 244.4 L312.0 244.0 L313.0 245.3 L314.0 244.7 L315.0 244.7 L316.0 244.9 L317.0 245.6 L318.0 245.0 L319.0 245.7 L320.0 245.2 L321.0 245.1 L322.0 245.1 L323.0 244.2 L324.0 244.7 L325.0 244.5 L325.9 244.1 L326.9 245.4 L327.9 244.8 L328.9 245.1 L329.9 245.7 L330.8 245.7 L331.8 245.3 L332.8 245.5 L333.8 245.7 L334.7 246.2 L335.7 245.2 L336.7 245.7 L337.7 245.3 L338.7 245.2 L339.7 246.1 L340.8 245.8 L341.8 245.8 L342.8 246.2 L343.8 246.5 L344.8 245.8 L345.8 245.8 L346.8 245.7 L347.8 245.6 L348.9 245.9 L349.9 245.5 L350.9 245.6 L351.9 245.5 L352.9 246.2 L353.9 246.0 L354.9 246.2 L355.9 246.4 L357.0 245.3 L358.0 245.4 L359.0 246.1 L360.0 246.1 L361.0 244.9 L362.0 244.5 L363.0 244.9 L364.0 244.3 L365.0 244.4 L366.0 244.2 L367.0 245.1 L368.0 245.6 L369.0 245.9 L370.0 244.6 L371.1 246.5 L372.2 247.9 L373.4 248.2 L374.5 250.5 L375.4 250.2 L376.2 248.3 L377.1 248.5 L378.0 247.0 L379.1 246.5 L380.2 246.9 L381.4 246.3 L382.5 244.7 L383.5 244.7 L384.5 244.8 L385.6 244.5 L386.6 244.1 L387.6 244.2 L388.6 244.9 L389.7 243.8 L390.7 244.4 L391.7 244.3 L392.7 243.5 L393.8 243.8 L394.8 244.3 L395.8 244.3 L396.8 243.4 L397.8 244.7 L398.9 244.7 L399.9 245.0 L400.9 243.6 L401.9 243.4 L403.0 242.9 L404.0 244.0 L405.0 243.4 L406.0 242.8 L407.0 243.1 L408.0 244.0 L409.0 244.0 L410.0 242.9 L411.0 242.3 L412.0 243.4 L413.0 243.0 L414.0 243.1 L415.0 241.9 L416.0 241.6 L417.0 242.6 L418.0 242.5 L419.0 241.9 L420.0 243.3 L421.0 243.2 L422.0 243.5 L423.0 242.3 L424.0 243.4 L425.0 242.4 L426.0 243.5 L427.0 243.1 L428.0 242.9 L429.0 243.2 L430.0 244.0 L431.0 243.1 L432.0 242.6 L433.0 243.2 L434.0 242.9 L435.0 242.6 L436.0 242.7 L437.0 242.5 L438.0 242.8 L439.0 243.1 L440.0 243.2 L441.0 244.2 L442.0 243.7 L443.0 244.1 L444.0 243.8 L445.0 244.1 L446.0 243.7 L447.0 244.1 L448.0 243.9 L449.0 245.8 L450.0 246.6 L451.0 246.7 L452.0 246.3 L453.0 246.6 L454.0 244.7 L455.0 244.9 L455.9 244.2 L456.9 243.9 L457.8 244.1 L458.8 243.2 L459.7 242.9 L460.6 243.0 L461.6 243.3 L462.5 242.0 L463.5 242.9 L464.5 243.1 L465.5 243.3 L466.5 243.2 L467.5 243.2 L468.5 242.9 L469.5 243.2 L470.5 243.4 L471.5 244.8 L472.5 244.6 L473.4 244.0 L474.4 243.6 L475.3 244.6 L476.2 244.7 L477.2 244.3 L478.1 243.3 L479.1 242.7 L480.0 242.5 L481.0 242.8 L482.0 242.4 L483.0 242.8 L484.0 242.7 L485.0 243.9 L486.0 244.3 L487.0 243.7 L488.0 243.0 L489.0 244.1 L490.0 243.3 L491.0 243.2 L492.0 242.5 L493.0 243.0 L494.0 243.4 L495.0 243.5 L496.0 243.1 L497.0 243.5 L498.0 242.8 L499.0 243.1 L500.0 242.9 L501.0 243.4 L502.0 242.9 L503.0 242.8 L504.0 243.3 L505.0 243.3 L506.0 244.0 L507.0 244.1 L508.0 244.6 L509.0 244.6 L510.0 244.7 L511.0 245.3 L512.0 244.8 L513.0 244.7 L514.0 246.0 L515.0 245.1 L516.0 246.0 L517.0 246.3 L518.0 245.5 L519.0 246.8 L520.0 247.5 L521.0 247.5 L522.0 247.8 L523.0 248.3 L524.0 247.5 L525.0 248.1 L526.0 248.5 L527.0 250.0 L528.0 251.0 L529.0 252.0 L530.0 250.5 L531.0 249.9 L532.0 248.6 L533.0 247.9 L534.0 246.5 L535.0 245.4 L536.0 244.8 L537.0 245.2 L538.0 244.8 L539.0 246.0 L540.0 245.8 L541.0 245.9 L542.0 245.9 L543.0 245.9 L544.0 245.6 L545.0 244.6 L546.0 245.7 L547.0 245.9 L548.0 245.6 L549.0 245.5 L550.0 245.7 L551.0 244.7 L552.0 245.5 L553.0 244.9 L554.0 244.4 L555.0 244.6 L556.0 245.4 L557.0 244.7 L558.0 245.5 L559.0 246.1 L560.0 245.4 L561.0 245.0 L562.0 245.0 L563.0 245.3 L564.0 245.6 L565.0 245.4 L566.0 245.7 L567.0 245.0 L568.0 245.2 L569.0 245.7 L570.0 246.9 L571.0 246.7 L572.0 246.5 L573.0 245.2 L574.0 244.5 L575.0 244.3 L576.0 244.6 L577.1 244.5 L578.2 244.2 L579.2 243.3 L580.3 243.1 L581.4 242.8 L582.5 242.4 L583.5 241.9 L584.5 243.2 L585.5 242.4 L586.5 243.6 L587.5 243.9 L588.5 242.5 L589.5 242.9 L590.5 243.7 L591.5 244.2 L592.5 243.6 L593.5 243.1 L594.5 242.9 L595.5 244.2 L596.5 243.4 L597.5 243.8 L598.5 243.2 L599.5 243.8 L600.5 244.8 L601.5 243.7 L602.5 244.6 L603.5 244.4 L604.5 245.1 L605.4 245.0 L606.4 244.2 L607.4 245.2 L608.4 244.8 L609.4 243.9 L610.4 243.7 L611.3 244.5 L612.3 244.7 L613.3 244.6 L614.3 244.3 L615.3 244.6 L616.2 244.7 L617.2 245.7 L618.2 244.6 L619.2 245.6 L620.2 246.1 L621.2 245.1 L622.1 246.2 L623.1 246.3 L624.1 246.6 L625.1 245.7 L626.1 245.7 L627.1 245.7 L628.0 246.9 L629.0 246.5 L630.0 246.1 L631.0 245.9 L632.0 245.5 L633.0 244.9 L634.0 244.7 L635.0 245.9 L636.0 245.2 L637.0 246.0 L638.0 245.0 L639.0 244.6 L640.0 244.9 L641.0 245.2 L642.0 246.1 L643.0 247.9 L644.0 248.9 L645.0 249.8 L646.0 250.5 L647.1 250.4 L648.2 250.2 L649.2 249.1 L650.3 248.8 L651.4 247.3 L652.5 247.7 L653.5 247.3 L654.6 247.6 L655.6 247.4 L656.7 246.6 L657.7 245.9 L658.8 247.1 L659.8 245.9 L660.8 246.1 L661.9 245.8 L662.9 245.5 L664.0 246.1 L665.0 246.6 L666.0 245.6 L667.0 246.0 L668.0 245.6 L669.0 245.9 L670.0 245.8 L671.0 245.4 L672.0 245.3 L673.0 245.4 L674.0 246.7 L675.0 246.4 L676.0 245.8 L677.0 246.9 L678.0 247.4 L679.0 246.7 L680.0 245.9 L681.0 245.8 L682.0 245.7 L683.0 246.1 L684.0 245.8 L685.0 246.0 L686.0 246.2 L687.0 246.8 L688.0 247.6 L689.0 247.6 L690.0 247.0 L691.0 246.9 L692.0 247.0 L693.0 246.8 L694.0 246.7 L695.0 246.2 L696.0 246.4 L697.0 247.7 L698.0 246.7 L699.0 247.0 L700.0 247.4 L701.0 247.9 L702.0 246.9 L703.0 246.7 L704.0 246.6 L705.0 246.9 L706.0 247.1 L707.0 248.0 L708.0 248.1 L709.0 248.2 L710.0 246.8 L711.0 246.4 L712.0 247.4 L713.0 248.1 L714.0 247.6 L715.0 247.6 L716.0 246.6 L717.0 247.0 L718.0 248.1 L719.0 248.2 L720.0 248.3 L720.9 249.5 L721.9 249.2 L722.8 249.6 L723.7 250.4 L724.8 250.8 L725.8 251.1 L726.9 251.4 L727.9 251.0 L729.0 250.7 L730.0 250.6 L731.0 250.0 L732.0 249.9 L733.0 248.8 L734.0 249.7 L735.0 249.0 L736.0 249.8 L737.0 249.5 L738.0 248.7 L739.0 248.1 L740.0 248.1 L741.0 248.8 L742.0 249.2 L743.0 248.4 L744.0 248.1 L745.0 248.9 L746.0 249.3 L747.0 249.1 L748.0 248.9 L749.0 249.5 L750.0 248.7 L751.0 249.1 L752.0 249.5 L753.0 250.6 L754.0 250.4 L755.0 250.8 L756.0 250.1 L757.0 249.3 L758.0 249.0 L759.0 250.0 L760.0 249.8 L761.0 248.9 L762.0 248.1 L763.0 248.5 L764.0 248.9 L765.0 248.4 L766.0 247.9 L767.0 248.4 L768.0 248.9 L769.0 247.8 L770.0 247.0 L771.0 247.3 L772.0 247.4 L773.0 247.8 L774.0 247.0 L775.0 247.7 L776.0 247.8 L777.0 247.3 L778.0 246.5 L779.0 247.6 L780.0 246.7 L781.0 247.2 L782.0 246.2 L783.0 245.8 L784.0 246.6 L785.0 245.9 L786.0 247.1 L787.0 246.9 L788.0 246.4 L789.0 246.5 L790.0 247.0 L791.0 247.8 L792.0 248.7 L793.0 247.7 L794.0 248.0 L795.0 247.9 L795.9 249.4 L796.9 248.6 L797.8 248.4 L798.8 248.6 L799.7 249.4 L800.6 250.7 L801.6 251.3 L802.5 251.4 L803.4 251.4 L804.4 251.1 L805.3 249.7 L806.2 248.8 L807.2 249.6 L808.1 249.3 L809.1 247.7 L810.0 248.1 L811.0 247.7 L812.0 247.4 L813.0 247.2 L814.0 246.7 L815.0 246.2 L816.0 246.4 L817.0 246.5 L818.0 247.5 L819.0 246.2 L820.0 247.2 L821.0 246.1 L822.1 246.0 L823.1 246.8 L824.2 246.9 L825.2 246.3 L826.2 245.3 L827.3 245.8 L828.3 245.7 L829.4 246.5 L830.4 245.5 L831.5 245.4 L832.5 246.3 L833.5 245.2 L834.4 245.6 L835.4 246.5 L836.4 246.8 L837.4 245.7 L838.3 245.5 L839.3 245.5 L840.3 247.1 L841.2 246.5 L842.2 247.3 L843.2 247.9 L844.2 247.2 L845.1 247.0 L846.1 248.2 L847.1 248.0 L848.1 247.5 L849.0 248.2 L850.0 247.8 L851.0 244.0 L852.0 245.0 L853.0 247.6 L854.0 248.5 L854.9 248.4 L855.9 249.0 L856.8 247.7 L857.8 247.9 L858.7 248.5 L859.6 249.6 L860.6 250.1 L861.5 249.4 L862.5 249.1 L863.4 248.9 L864.4 248.8 L865.3 249.3 L866.2 247.9 L867.2 248.4 L868.1 248.2 L869.1 248.0 L870.0 247.7 L871.0 247.4 L872.0 246.9 L873.0 246.7 L874.0 246.7 L875.0 247.5 L876.0 246.5 L877.0 246.4 L878.0 247.4 L879.0 246.8 L880.0 246.3 L881.0 246.1 L882.0 247.0 L883.0 246.8 L884.0 248.0 L885.0 248.1 L886.0 248.4 L887.0 247.2 L888.0 246.5 L889.0 246.4 L890.0 247.1 L891.0 247.6 L892.0 247.4 L893.0 246.9 L894.0 247.1 L895.0 247.5 L896.0 247.8 L897.0 248.0 L898.0 248.2 L899.0 248.0 L900.0 247.0 L901.0 247.9 L902.1 247.2 L903.1 247.4 L904.2 247.1 L905.2 247.6 L906.2 246.8 L907.3 246.6 L908.3 246.6 L909.4 246.3 L910.4 247.5 L911.5 247.3 L912.5 246.8 L913.4 247.5 L914.2 249.3 L915.1 249.5 L916.0 249.6 L917.0 251.9 L918.0 253.4 L919.0 253.0 L920.0 250.6 L921.0 249.8 L922.0 250.0 L923.0 249.7 L924.0 249.4 L925.0 247.5 L926.0 247.3 L927.0 246.9 L928.0 246.8 L929.0 248.0 L930.0 247.6 L931.0 247.9 L932.0 247.0 L933.0 247.5 L934.0 246.8 L935.0 246.1 L936.0 247.0 L937.0 247.7 L938.0 246.5 L939.0 247.1 L940.0 247.5 L941.0 247.0 L942.0 247.2 L943.0 246.9 L944.0 247.1 L945.0 247.3 L946.0 248.1 L947.0 248.5 L948.0 248.0 L949.0 247.6 L950.0 248.1 L951.0 248.3 L952.0 247.2 L953.0 246.7 L954.0 246.0 L955.0 246.5 L956.0 246.6 L957.0 245.9 L958.0 246.0 L959.0 246.7 L960.0 247.3 L961.0 247.8 L962.0 247.2 L963.0 247.3 L964.0 248.4 L965.0 248.4 L965.9 248.4 L966.9 248.6 L967.8 250.0 L968.8 249.5 L969.7 250.0 L970.6 249.9 L971.6 250.2 L972.5 251.3 L973.5 251.5 L974.6 250.3 L975.6 249.5 L976.7 250.0 L977.7 249.1 L978.8 248.4 L979.8 249.5 L980.8 248.9 L981.9 249.2 L982.9 248.5 L984.0 248.9 L985.0 248.1 L986.0 247.7 L987.0 247.5 L988.0 248.6 L989.0 249.3 L990.0 250.1 L991.0 249.1 L992.0 250.0 L993.0 250.0 L994.0 250.4 L995.0 250.1 L996.0 250.0 L997.1 250.4 L998.1 251.1 L999.2 249.8 L1000.2 250.0 L1001.2 250.6 L1002.3 251.0 L1003.3 249.7 L1004.4 249.1 L1005.4 250.3 L1006.5 250.6 L1007.5 249.8 L1008.5 248.5 L1009.5 249.5 L1010.5 248.7 L1011.5 249.2 L1012.5 248.7 L1013.5 248.7 L1014.5 247.4 L1015.5 247.9 L1016.5 246.9 L1017.5 246.7 L1018.5 247.5 L1019.5 247.7 L1020.5 246.7 L1021.5 246.4 L1022.5 246.6 L1023.5 246.9 L1024.5 246.8 L1025.5 246.3 L1026.5 246.3 L1027.5 247.2 L1028.5 247.8 L1029.5 246.4 L1030.5 246.9 L1031.5 247.4 L1032.5 246.3 L1033.5 247.6 L1034.5 246.8 L1035.5 247.6 L1036.5 247.9 L1037.5 248.2 L1038.5 247.9 L1039.5 248.2 L1040.5 248.7 L1041.5 248.7 L1042.5 249.2 L1043.5 249.2 L1044.5 249.3 L1045.5 248.7 L1046.5 249.7 L1047.5 250.0 L1048.5 249.4 L1049.6 250.1 L1050.6 250.2 L1051.7 249.6 L1052.7 248.8 L1053.8 249.0 L1054.8 248.4 L1055.8 248.1 L1056.9 248.5 L1057.9 247.9 L1059.0 248.3 L1060.0 248.4 L1061.0 247.6 L1062.0 248.4 L1063.0 247.6 L1064.0 248.5 L1065.0 248.8 L1066.0 248.4 L1067.0 247.4 L1068.0 247.9 L1069.0 247.8 L1070.0 248.7 L1070.9 248.0 L1071.8 249.2 L1072.8 250.1 L1073.7 250.2 L1074.7 250.1 L1075.8 248.8 L1076.8 249.7 L1077.8 249.0 L1078.8 249.5 L1079.9 249.4 L1080.9 247.9 L1081.9 248.5 L1082.9 248.7 L1084.0 247.2 L1085.0 247.1 L1086.0 247.8 L1087.0 246.9 L1088.0 247.8 L1089.0 247.0 L1090.0 247.6 L1091.0 246.6 L1092.0 246.9 L1093.0 247.7 L1094.0 246.6 L1095.0 246.3 L1096.0 246.6 L1097.0 246.3 L1098.0 245.7 L1099.0 245.7 L1100.0 245.7 L1100.9 246.6 L1101.8 246.2 L1102.8 246.2 L1103.7 244.7 L1104.7 245.4 L1105.7 244.4 L1106.7 244.9 L1107.7 245.2 L1108.7 244.8 L1109.7 245.6 L1110.7 245.3 L1111.6 245.2 L1112.6 245.7 L1113.6 244.5 L1114.6 245.7 L1115.6 245.4 L1116.6 244.9 L1117.6 245.5 L1118.6 244.7 L1119.6 245.8 L1120.6 245.4 L1121.6 244.9 L1122.6 245.4 L1123.6 245.0 L1124.6 244.4 L1125.5 245.3 L1126.5 244.3 L1127.5 245.3 L1128.5 244.7 L1129.5 245.1 L1130.5 245.9 L1131.5 245.4 L1132.5 245.4 L1133.5 244.7 L1134.5 244.0 L1135.5 243.7 L1136.5 243.8 L1137.5 244.7 L1138.5 244.5 L1139.5 244.6 L1140.5 245.3 L1141.5 244.1 L1142.5 243.9 L1143.5 244.5 L1144.5 243.5 L1145.5 243.2 L1146.5 243.7 L1147.5 243.3 L1148.5 243.8 L1149.6 243.8 L1150.6 244.5 L1151.7 244.8 L1152.7 244.4 L1153.8 245.0 L1154.8 245.1 L1155.8 244.6 L1156.9 245.9 L1157.9 245.2 L1159.0 244.9 L1160.0 244.8 L1160.9 246.0 L1161.9 247.1 L1162.8 247.5 L1163.8 247.2 L1164.7 247.2 L1165.6 247.0 L1166.6 248.3 L1167.5 248.8 L1168.5 248.5 L1169.5 248.9 L1170.6 248.7 L1171.6 249.5 L1172.6 249.3 L1173.6 248.5 L1174.7 249.3 L1175.7 248.1 L1176.7 248.6 L1177.7 248.5 L1178.8 248.2 L1179.8 247.8 L1180.8 248.9 L1181.8 247.9 L1182.8 248.6 L1183.9 249.4 L1184.9 248.3 L1185.9 248.1 L1186.9 248.7 L1188.0 248.7 L1189.0 249.0 L1190.0 249.3 L1191.0 247.9 L1192.0 247.4 L1193.0 246.9 L1194.0 246.1 L1194.9 247.1 L1195.8 246.9 L1196.7 246.6 L1197.5 274.2 L1198.3 230.4 L1199.5 212.0 L1200.8 201.2 L1202.5 199.6 L1203.5 203.0 L1204.6 207.5 L1207.0 224.2 L1209.2 230.8 L1212.0 233.0 L1214.6 234.6 L1215.3 287.7 L1215.9 238.7 L1217.0 215.8 L1218.7 189.8 L1220.0 195.0 L1221.7 183.5 L1222.7 188.7 L1224.2 172.0 L1225.8 180.4 L1227.0 171.0 L1228.3 167.9 L1229.6 173.0 L1230.8 156.5 L1232.0 165.8 L1233.7 186.7 L1234.6 178.3 L1235.8 185.6 L1237.3 173.1 L1239.4 159.6 L1241.5 138.7 L1242.0 126.2 L1244.6 118.0 L1247.0 101.2 L1248.3 88.0 L1249.1 88.0 L1249.8 95.0 L1251.9 105.4 L1255.0 126.2 L1258.0 147.0 L1261.2 170.0 L1264.4 190.8 L1267.5 205.4 L1271.7 220.0 L1275.8 230.4 L1280.0 236.7 L1284.2 241.9 L1290.4 248.1 L1296.7 252.3 L1305.0 256.0 L1315.4 258.1 L1325.8 259.2 L1340.0 259.4 L1345.5 259.6 L1352.7 262.3 L1370.7 262.3 L1373.0 261.3 L1386.0 261.6 L1391.0 263.2 L1405.4 263.2 L1415.0 261.6 L1436.6 260.8 L1487.0 260.8 L1501.0 261.6 L1509.6 264.0 L1518.0 264.0 L1530.0 262.3 L1546.8 261.6 L1616.0 261.8 L1623.4 264.0 L1630.6 264.9 L1640.0 264.0 L1654.6 262.3 L1664.0 260.4 L1688.0 260.6 L1693.0 261.6 L1707.3 261.8 L1712.0 262.5 L1751.0 262.5" stroke="#fff200" stroke-width="1.4" fill="none" stroke-linejoin="round" shape-rendering="crispEdges"/></g><path d="M45 58H65.2L55.1 67.8Z" fill="#f7941d"/><path d="M46 69H64.2V87.9H58.9L55.1 95.2L51.3 87.9H46Z" fill="#000" stroke="#f7941d" stroke-width="2" stroke-linejoin="miter"/><path d="M50.6 73.2H59.6V75.1H56.1V84H54.1V75.1H50.6Z" fill="#f7941d"/><path d="M586.6 36.7H593M586.6 36V53M586.6 52.4H593M1161 36.7H1167.4M1167.4 36V53M1161 52.4H1167.4" stroke="#f0f0f0" stroke-width="1.3" fill="none"/><rect x="587" y="44" width="580" height="2" fill="#b9b9b9"/><path d="M596 33H611L603.5 38.2Z" fill="#f7941d"/><path d="M597.4 40.6H609.2V52.2H606L603.3 56L600.6 52.2H597.4Z" fill="#000" stroke="#f7941d" stroke-width="1.6"/><path d="M600 43H607V45H604.6V51H602.4V45H600Z" fill="#f7941d"/><path d="M9.5 161.9H78L83.5 174.5L78 187.1H9.5Q6.6 187.1 6.6 184.2V164.8Q6.6 161.9 9.5 161.9Z" fill="#1c1a08" stroke="#f5e829" stroke-width="1.5" stroke-linejoin="round"/><line x1="32.9" x2="32.9" y1="161.9" y2="187.1" stroke="#f5e829" stroke-width="1.5"/><path d="M9.5 395.9H78L83.5 408.5L78 421.1H9.5Q6.6 421.1 6.6 418.2V398.8Q6.6 395.9 9.5 395.9Z" fill="#141a0a" stroke="#8cc63f" stroke-width="1.5" stroke-linejoin="round"/><line x1="32.9" x2="32.9" y1="395.9" y2="421.1" stroke="#8cc63f" stroke-width="1.5"/><path d="M9.5 722.7H30L41.6 735.0L30 747.3H9.5Q6.6 747.3 6.6 744.4V725.6Q6.6 722.7 9.5 722.7Z" fill="#1a0f06" stroke="#f7941d" stroke-width="1.4" stroke-linejoin="round"/><path d="M9.5 947.7H30L41.6 960.0L30 972.3H9.5Q6.6 972.3 6.6 969.4V950.6Q6.6 947.7 9.5 947.7Z" fill="#6d2d8c" stroke="#6d2d8c" stroke-width="1.4" stroke-linejoin="round"/><path d="M1710.5 65H1741.5Q1744.3 65 1744.3 67.8V98.8Z" fill="#4b4b4b"/><circle cx="1737.3" cy="71.6" r="4.2" fill="none" stroke="#a9a9a9" stroke-width="1.5"/><line x1="1733.8" y1="75.3" x2="1728" y2="80.8" stroke="#b5b5b5" stroke-width="2.6" stroke-linecap="round"/><circle cx="1761.4" cy="503.6" r="1.9" fill="#cfcfcf"/><circle cx="1761.4" cy="512.0" r="1.9" fill="#cfcfcf"/><circle cx="1761.4" cy="520.4" r="1.9" fill="#cfcfcf"/></svg>
<span class="t" style="left:10.17px;top:169.00px;font-size:12.00px;color:#f5e829;">C</span><span class="t" style="left:21.41px;top:169.00px;font-size:12.00px;color:#f5e829;">1</span><span class="t" style="left:45.06px;top:169.00px;font-size:12.00px;color:#f5e829;transform:scaleX(0.9350);transform-origin:0 0;">20</span><span class="t" style="left:61.60px;top:169.00px;font-size:12.00px;color:#f5e829;">V</span><span class="t" style="left:102.00px;top:165.00px;font-size:17.50px;color:#f0e52a;letter-spacing:1.022px;">U_loop,coil</span><span class="t" style="left:10.17px;top:403.00px;font-size:12.00px;color:#8cc63f;">C</span><span class="t" style="left:21.41px;top:403.00px;font-size:12.00px;color:#8cc63f;">4</span><span class="t" style="left:35.68px;top:403.00px;font-size:12.00px;color:#8cc63f;transform:scaleX(0.8415);transform-origin:0 0;">200</span><span class="t" style="left:57.85px;top:403.00px;font-size:12.00px;color:#8cc63f;letter-spacing:0.700px;">mV</span><span class="t" style="left:102.00px;top:399.00px;font-size:17.50px;color:#8cc63f;letter-spacing:1.095px;">U_Photod</span><span class="t" style="left:12.90px;top:729.00px;font-size:12.00px;color:#f7941d;">M</span><span class="t" style="left:27.71px;top:729.00px;font-size:12.00px;color:#f7941d;">1</span><span class="t" style="left:52.90px;top:726.00px;font-size:17.50px;color:#f7941d;letter-spacing:0.666px;">B_t</span><span class="t" style="left:12.90px;top:955.00px;font-size:12.00px;color:#ffffff;">M</span><span class="t" style="left:27.76px;top:955.00px;font-size:12.00px;color:#ffffff;">2</span><span class="t" style="left:53.20px;top:951.00px;font-size:17.50px;color:#7b2d8e;letter-spacing:0.236px;">I_p</span>
<div class="abs" style="left:1769px;top:29px;width:151px;height:967px;box-sizing:border-box;border:1px solid #5f5853;border-right:0;background:#2e2e2e"></div><svg class="abs" style="left:1780px;top:0" width="140" height="30" viewBox="1780 0 140 30"><g fill="#ffffff" stroke="#ffffff" stroke-width="0.55" font-family="Liberation Sans, sans-serif" font-weight="bold" font-size="30.1"><text transform="translate(1785.42,25.85) scale(1.012,1)">T</text><text transform="translate(1796.34,25.85) scale(1.156,1)">e</text><text transform="translate(1838.15,25.85) scale(0.785,1)">r</text><text transform="translate(1846.46,25.85) scale(1.053,1)">o</text><text transform="translate(1864.42,25.85) scale(0.955,1)">n</text><text transform="translate(1878.28,25.85) scale(1.396,1)">i</text><text transform="translate(1887.41,25.85) scale(0.955,1)">x</text><path d="M1815.1 4.2H1819.9V25.85H1815.1Z"/><path d="M1826 17.8L1830.1 25.85H1823.6L1823 22.5Z"/><path d="M1831.6 11L1835.5 4.6L1836.1 5V9.2H1837V11.3H1836.1V25.85H1831.6Z"/><path d="M1814.9 25.85H1820.3L1831.1 9.2H1826.1Z" fill="#1fc0e4" stroke="#2d2d2d" stroke-width="0.5"/></g></svg><span class="t" style="left:1802.60px;top:32.00px;font-size:14.30px;color:#ececec;letter-spacing:1.271px;font-weight:bold;-webkit-text-stroke:0.35px #ececec;">Add New...</span><div class="btn" style="left:1778.0px;top:54.2px;width:63.0px;height:36.6px"></div><div class="btn" style="left:1850.0px;top:54.2px;width:63.0px;height:36.6px"></div><div class="btn" style="left:1778.0px;top:100.1px;width:63.0px;height:36.6px"></div><div class="btn" style="left:1850.0px;top:100.1px;width:63.0px;height:36.6px"></div><div class="btn" style="left:1778.0px;top:146.0px;width:63.0px;height:36.6px"></div><div class="btn" style="left:1850.0px;top:146.0px;width:63.0px;height:36.6px"></div><div class="btn" style="left:1778.0px;top:195.9px;width:63.0px;height:36.6px"></div><div class="btn" style="left:1850.0px;top:195.9px;width:63.0px;height:36.6px"></div><span class="t" style="left:1784.60px;top:64.00px;font-size:15.40px;color:#f4f4f4;-webkit-text-stroke:0.2px #f4f4f4;transform:scaleX(0.9423);transform-origin:0 0;">Cursors</span><span class="t" style="left:1856.60px;top:64.00px;font-size:15.40px;color:#f4f4f4;letter-spacing:0.210px;-webkit-text-stroke:0.2px #f4f4f4;">Callout</span><span class="t" style="left:1780.20px;top:110.00px;font-size:15.40px;color:#f4f4f4;letter-spacing:-0.269px;-webkit-text-stroke:0.2px #f4f4f4;">Measure</span><span class="t" style="left:1858.60px;top:110.00px;font-size:15.40px;color:#f4f4f4;-webkit-text-stroke:0.2px #f4f4f4;transform:scaleX(0.9325);transform-origin:0 0;">Search</span><span class="t" style="left:1785.70px;top:148.00px;font-size:15.40px;color:#f4f4f4;-webkit-text-stroke:0.2px #f4f4f4;transform:scaleX(0.9250);transform-origin:0 0;">Results</span><span class="t" style="left:1792.30px;top:164.00px;font-size:15.40px;color:#f4f4f4;-webkit-text-stroke:0.2px #f4f4f4;transform:scaleX(0.9507);transform-origin:0 0;">Table</span><span class="t" style="left:1867.60px;top:156.00px;font-size:15.40px;color:#f4f4f4;letter-spacing:0.321px;-webkit-text-stroke:0.2px #f4f4f4;">Plot</span><span class="t" style="left:1856.60px;top:206.00px;font-size:15.40px;color:#f4f4f4;letter-spacing:0.280px;-webkit-text-stroke:0.2px #f4f4f4;">More...</span><div class="abs" style="left:1773px;top:189px;width:144px;height:1px;background:#5a534e"></div><div class="abs" style="left:1773px;top:241px;width:144px;height:1px;background:#5a534e"></div><svg class="abs" style="left:1790px;top:196px" width="40" height="36" viewBox="1790 196 40 36"><rect x="1798.6" y="203.4" width="20.6" height="18" fill="none" stroke="#a6a6a6" stroke-width="1.6" stroke-dasharray="3.2 2"/><circle cx="1811.2" cy="210.4" r="4.3" fill="#2d2d2d" stroke="#b0b0b0" stroke-width="1.5"/><line x1="1808" y1="213.8" x2="1803.5" y2="217.6" stroke="#b8b8b8" stroke-width="2.4" stroke-linecap="round"/><path d="M1815.2 217.6L1823.2 221.6L1820.3 222.6L1822.8 226L1821.2 226.9L1818.9 223.5L1816.8 225.6Z" fill="#b4b4b4"/></svg><div class="badge" style="left:3px;width:90px;background:#cbcbcb"><div class="hd" style="background:#4a4823"></div><div class="ln" style="background:#a9a9a9"></div></div><span class="t" style="left:8.00px;top:1003.00px;font-size:16.20px;color:#ffff33;-webkit-text-stroke:0.25px #ffff33;transform:scaleX(0.8788);transform-origin:0 0;">Ch</span><span class="t" style="left:31.40px;top:1003.00px;font-size:16.20px;color:#ffff33;-webkit-text-stroke:0.25px #ffff33;transform:scaleX(0.8600);transform-origin:0 0;">1</span><span class="t" style="left:8.40px;top:1025.00px;font-size:14.00px;color:#111111;letter-spacing:0.150px;">5 V/div</span><span class="t" style="left:8.40px;top:1044.00px;font-size:14.00px;color:#111111;letter-spacing:0.699px;">1 MΩ</span><span class="t" style="left:8.40px;top:1063.00px;font-size:14.00px;color:#111111;letter-spacing:0.190px;">200 kHz</span><span class="t" style="left:74.60px;top:1062.00px;font-size:8.60px;color:#111111;font-weight:bold;">B</span><span class="t" style="left:80.30px;top:1064.00px;font-size:8.60px;color:#111111;font-weight:bold;">w</span><div class="badge" style="left:98px;width:90px;background:#828282"><div class="hd" style="background:#278183"></div><div class="ln" style="background:#6f7f80"></div></div><span class="t" style="left:103.00px;top:1003.00px;font-size:16.20px;color:#161616;-webkit-text-stroke:0.25px #161616;transform:scaleX(0.8788);transform-origin:0 0;">Ch</span><span class="t" style="left:127.30px;top:1003.00px;font-size:16.20px;color:#161616;-webkit-text-stroke:0.25px #161616;transform:scaleX(0.8600);transform-origin:0 0;">2</span><span class="t" style="left:103.40px;top:1025.00px;font-size:14.00px;color:#2e2e2e;letter-spacing:0.274px;">250 mV/div</span><span class="t" style="left:103.40px;top:1044.00px;font-size:14.00px;color:#2e2e2e;letter-spacing:0.699px;">1 MΩ</span><span class="t" style="left:103.40px;top:1063.00px;font-size:14.00px;color:#2e2e2e;letter-spacing:0.190px;">200 kHz</span><span class="t" style="left:169.60px;top:1062.00px;font-size:8.60px;color:#2e2e2e;font-weight:bold;">B</span><span class="t" style="left:175.30px;top:1064.00px;font-size:8.60px;color:#2e2e2e;font-weight:bold;">w</span><div class="badge" style="left:193px;width:90px;background:#828282"><div class="hd" style="background:#8e3a4a"></div><div class="ln" style="background:#837074"></div></div><span class="t" style="left:198.00px;top:1003.00px;font-size:16.20px;color:#a9a9a9;-webkit-text-stroke:0.25px #a9a9a9;transform:scaleX(0.8788);transform-origin:0 0;">Ch</span><span class="t" style="left:222.30px;top:1003.00px;font-size:16.20px;color:#a9a9a9;-webkit-text-stroke:0.25px #a9a9a9;transform:scaleX(0.8600);transform-origin:0 0;">3</span><span class="t" style="left:198.40px;top:1025.00px;font-size:14.00px;color:#2e2e2e;letter-spacing:0.274px;">450 mV/div</span><span class="t" style="left:198.40px;top:1044.00px;font-size:14.00px;color:#2e2e2e;letter-spacing:0.699px;">1 MΩ</span><span class="t" style="left:198.40px;top:1063.00px;font-size:14.00px;color:#2e2e2e;letter-spacing:0.190px;">200 kHz</span><span class="t" style="left:264.60px;top:1062.00px;font-size:8.60px;color:#2e2e2e;font-weight:bold;">B</span><span class="t" style="left:270.30px;top:1064.00px;font-size:8.60px;color:#2e2e2e;font-weight:bold;">w</span><div class="badge" style="left:288px;width:90px;background:#cbcbcb"><div class="hd" style="background:#34432a"></div><div class="ln" style="background:#a9a9a9"></div></div><span class="t" style="left:293.00px;top:1003.00px;font-size:16.20px;color:#8fd129;-webkit-text-stroke:0.25px #8fd129;transform:scaleX(0.8788);transform-origin:0 0;">Ch</span><span class="t" style="left:317.30px;top:1003.00px;font-size:16.20px;color:#8fd129;-webkit-text-stroke:0.25px #8fd129;transform:scaleX(0.8600);transform-origin:0 0;">4</span><span class="t" style="left:293.40px;top:1025.00px;font-size:14.00px;color:#111111;letter-spacing:0.274px;">200 mV/div</span><span class="t" style="left:293.40px;top:1044.00px;font-size:14.00px;color:#111111;letter-spacing:0.699px;">1 MΩ</span><span class="t" style="left:293.40px;top:1063.00px;font-size:14.00px;color:#111111;letter-spacing:0.190px;">200 kHz</span><span class="t" style="left:359.60px;top:1062.00px;font-size:8.60px;color:#111111;font-weight:bold;">B</span><span class="t" style="left:365.30px;top:1064.00px;font-size:8.60px;color:#111111;font-weight:bold;">w</span><div class="badge" style="left:383px;width:90px;background:#cbcbcb"><div class="hd" style="background:#46321f"></div><div class="ln" style="background:#a9a9a9"></div></div><span class="t" style="left:388.20px;top:1003.00px;font-size:16.20px;color:#ff9a1f;-webkit-text-stroke:0.25px #ff9a1f;transform:scaleX(0.9833);transform-origin:0 0;">Math 1</span><span class="t" style="left:388.40px;top:1025.00px;font-size:14.00px;color:#111111;letter-spacing:0.146px;">73.2 mT/div</span><span class="t" style="left:388.40px;top:1044.00px;font-size:14.00px;color:#111111;letter-spacing:0.071px;">Intg(Ch2)…</span><div class="badge" style="left:478px;width:90px;background:#cbcbcb"><div class="hd" style="background:#6a2c8a"></div><div class="ln" style="background:#a9a9a9"></div></div><span class="t" style="left:483.20px;top:1003.00px;font-size:16.20px;color:#ffffff;-webkit-text-stroke:0.25px #ffffff;transform:scaleX(1.0136);transform-origin:0 0;">Math 2</span><span class="t" style="left:483.40px;top:1025.00px;font-size:14.00px;color:#111111;letter-spacing:0.363px;">1.117 kA/div</span><span class="t" style="left:483.40px;top:1044.00px;font-size:14.00px;color:#111111;letter-spacing:0.205px;">-Intg(Ch3…</span><div class="btn" style="left:1023.2px;top:999.3px;width:39.5px;height:79.4px;border-radius:8px;background:linear-gradient(#393939 0%,#2d2d2d 25%,#2b2b2b 85%,#202020 100%)"></div><div class="abs" style="left:1027.2px;top:1007px;width:31.6px;height:2px;background:#f7941d"></div><div class="btn" style="left:1068.2px;top:999.3px;width:39.5px;height:79.4px;border-radius:8px;background:linear-gradient(#393939 0%,#2d2d2d 25%,#2b2b2b 85%,#202020 100%)"></div><div class="abs" style="left:1072.2px;top:1007px;width:31.6px;height:2px;background:#2b2bd0"></div><div class="btn" style="left:1129.0px;top:999.3px;width:39.5px;height:79.4px;border-radius:8px;background:linear-gradient(#393939 0%,#2d2d2d 25%,#2b2b2b 85%,#202020 100%)"></div><div class="abs" style="left:1133.0px;top:1007px;width:31.6px;height:2px;background:#b3202a"></div><div class="btn" style="left:1174.0px;top:999.3px;width:39.5px;height:79.4px;border-radius:8px;background:linear-gradient(#393939 0%,#2d2d2d 25%,#2b2b2b 85%,#202020 100%)"></div><div class="abs" style="left:1178.0px;top:1007px;width:31.6px;height:2px;background:#c6c6da"></div><div class="btn" style="left:1219.0px;top:999.3px;width:39.5px;height:79.4px;border-radius:8px;background:linear-gradient(#393939 0%,#2d2d2d 25%,#2b2b2b 85%,#202020 100%)"></div><div class="abs" style="left:1223.0px;top:1007px;width:31.6px;height:2px;background:#bf52f2"></div><span class="t" style="left:1037.99px;top:1034.00px;font-size:18.00px;color:#f0f0f0;">5</span><span class="t" style="left:1082.99px;top:1034.00px;font-size:18.00px;color:#f0f0f0;">6</span><span class="t" style="left:1135.80px;top:1021.00px;font-size:14.50px;color:#f4f4f4;letter-spacing:0.100px;">Add</span><span class="t" style="left:1134.20px;top:1037.00px;font-size:14.50px;color:#f4f4f4;letter-spacing:0.096px;">New</span><span class="t" style="left:1132.30px;top:1053.00px;font-size:14.50px;color:#f4f4f4;letter-spacing:0.255px;">Math</span><span class="t" style="left:1180.80px;top:1021.00px;font-size:14.50px;color:#f4f4f4;letter-spacing:0.100px;">Add</span><span class="t" style="left:1179.20px;top:1037.00px;font-size:14.50px;color:#f4f4f4;letter-spacing:0.096px;">New</span><span class="t" style="left:1183.55px;top:1053.00px;font-size:14.50px;color:#f4f4f4;transform:scaleX(0.9085);transform-origin:0 0;">Ref</span><span class="t" style="left:1225.80px;top:1021.00px;font-size:14.50px;color:#f4f4f4;letter-spacing:0.100px;">Add</span><span class="t" style="left:1224.20px;top:1037.00px;font-size:14.50px;color:#f4f4f4;letter-spacing:0.096px;">New</span><span class="t" style="left:1227.80px;top:1053.00px;font-size:14.50px;color:#f4f4f4;transform:scaleX(0.8805);transform-origin:0 0;">Bus</span><div class="abs" style="left:1118px;top:1000px;width:1px;height:78px;background:#5a534e"></div><div class="abs" style="left:1269px;top:1000px;width:1px;height:78px;background:#5a534e"></div><div class="abs" style="left:1811px;top:1000px;width:1px;height:78px;background:#5a534e"></div><div class="badge" style="left:1280.8px;top:1003.7px;height:74.6px;width:198.4px;background:#cbcbcb;box-shadow:0 0 0 1px #1c1c1c"><div class="hd" style="background:#58595b"></div><div class="ln" style="background:#a9a9a9;height:1.5px"></div></div><div class="badge" style="left:1485.8px;top:1003.7px;height:74.6px;width:158.4px;background:#cbcbcb;box-shadow:0 0 0 1px #1c1c1c"><div class="hd" style="background:#58595b"></div><div class="ln" style="background:#a9a9a9;height:1.5px"></div></div><div class="badge" style="left:1650.8px;top:1003.7px;height:74.6px;width:148.4px;background:#cbcbcb;box-shadow:0 0 0 1px #1c1c1c"><div class="hd" style="background:#58595b"></div><div class="ln" style="background:#a9a9a9;height:1.5px"></div></div><span class="t" style="left:1286.40px;top:1005.00px;font-size:15.00px;color:#f4f4f4;letter-spacing:0.597px;">Horizontal</span><span class="t" style="left:1285.40px;top:1024.00px;font-size:14.00px;color:#111111;letter-spacing:0.133px;">4.5 ms/div</span><span class="t" style="left:1391.40px;top:1024.00px;font-size:14.00px;color:#111111;letter-spacing:0.119px;">45 ms</span><span class="t" style="left:1285.40px;top:1043.00px;font-size:14.00px;color:#111111;transform:scaleX(0.9422);transform-origin:0 0;">SR: 1 MS/s</span><span class="t" style="left:1392.60px;top:1043.00px;font-size:14.00px;color:#111111;letter-spacing:0.032px;">1 µs/pt</span><span class="t" style="left:1285.40px;top:1062.00px;font-size:14.00px;color:#111111;letter-spacing:-0.111px;">RL: 45 kpts</span><span class="t" style="left:1405.80px;top:1062.00px;font-size:14.00px;color:#111111;letter-spacing:0.666px;">3%</span><svg class="abs" style="left:1388px;top:1060px" width="16" height="18" viewBox="1388 1060 16 18"><path d="M1391.9 1063.6H1399.6V1071.6H1397.4L1395.75 1074.4L1394.1 1071.6H1391.9Z" fill="#000" stroke="#f7941d" stroke-width="1.3"/><path d="M1393.6 1065.2H1397.9V1066.7H1396.5V1070.3H1395V1066.7H1393.6Z" fill="#f0f0f0"/></svg><span class="t" style="left:1491.80px;top:1005.00px;font-size:15.00px;color:#f4f4f4;letter-spacing:0.224px;">Trigger</span><div class="abs" style="left:1490px;top:1025.3px;width:29.7px;height:15px;box-sizing:border-box;border:1px solid #0a0a0a;border-radius:5px;background:#2525c8"></div><span class="t" style="left:1500.91px;top:1025.00px;font-size:14.00px;color:#ffffff;">6</span><svg class="abs" style="left:1526px;top:1022px" width="24" height="20" viewBox="1526 1022 24 20"><path d="M1530.3 1037.3H1534.6L1541.6 1027.8H1545.8" fill="none" stroke="#5959ad" stroke-width="1.3"/></svg><span class="t" style="left:1556.40px;top:1024.00px;font-size:14.00px;color:#111111;transform:scaleX(0.9660);transform-origin:0 0;">3 V</span><span class="t" style="left:1656.80px;top:1005.00px;font-size:15.00px;color:#f4f4f4;letter-spacing:0.406px;">Acquisition</span><span class="t" style="left:1655.90px;top:1024.00px;font-size:14.00px;color:#111111;letter-spacing:0.182px;">Manual,</span><span class="t" style="left:1736.80px;top:1024.00px;font-size:14.00px;color:#111111;letter-spacing:-0.201px;">Analyze</span><span class="t" style="left:1655.90px;top:1043.00px;font-size:14.00px;color:#111111;letter-spacing:-0.025px;">High Res: 16 bits</span><span class="t" style="left:1655.90px;top:1062.00px;font-size:14.00px;color:#111111;letter-spacing:-0.077px;">Single: 0 /1</span><div class="abs" style="left:1822px;top:999px;width:90px;height:36px;box-sizing:border-box;border:1px solid #94807f;border-radius:8px;background:#ff1d25"></div><span class="t" style="left:1840.00px;top:1008.00px;font-size:14.00px;color:#ffffff;letter-spacing:0.063px;font-weight:bold;">Preview</span><div class="abs" style="left:1822.5px;top:1040px;width:89.2px;height:38.4px;border-radius:6px;background:#cbcbcb"></div><span class="t" style="left:1824.80px;top:1042.00px;font-size:14.00px;color:#111111;letter-spacing:0.346px;">20 May 2025</span><span class="t" style="left:1830.00px;top:1060.00px;font-size:14.00px;color:#111111;letter-spacing:0.289px;">6:24:13 PM</span>
</body></html>
